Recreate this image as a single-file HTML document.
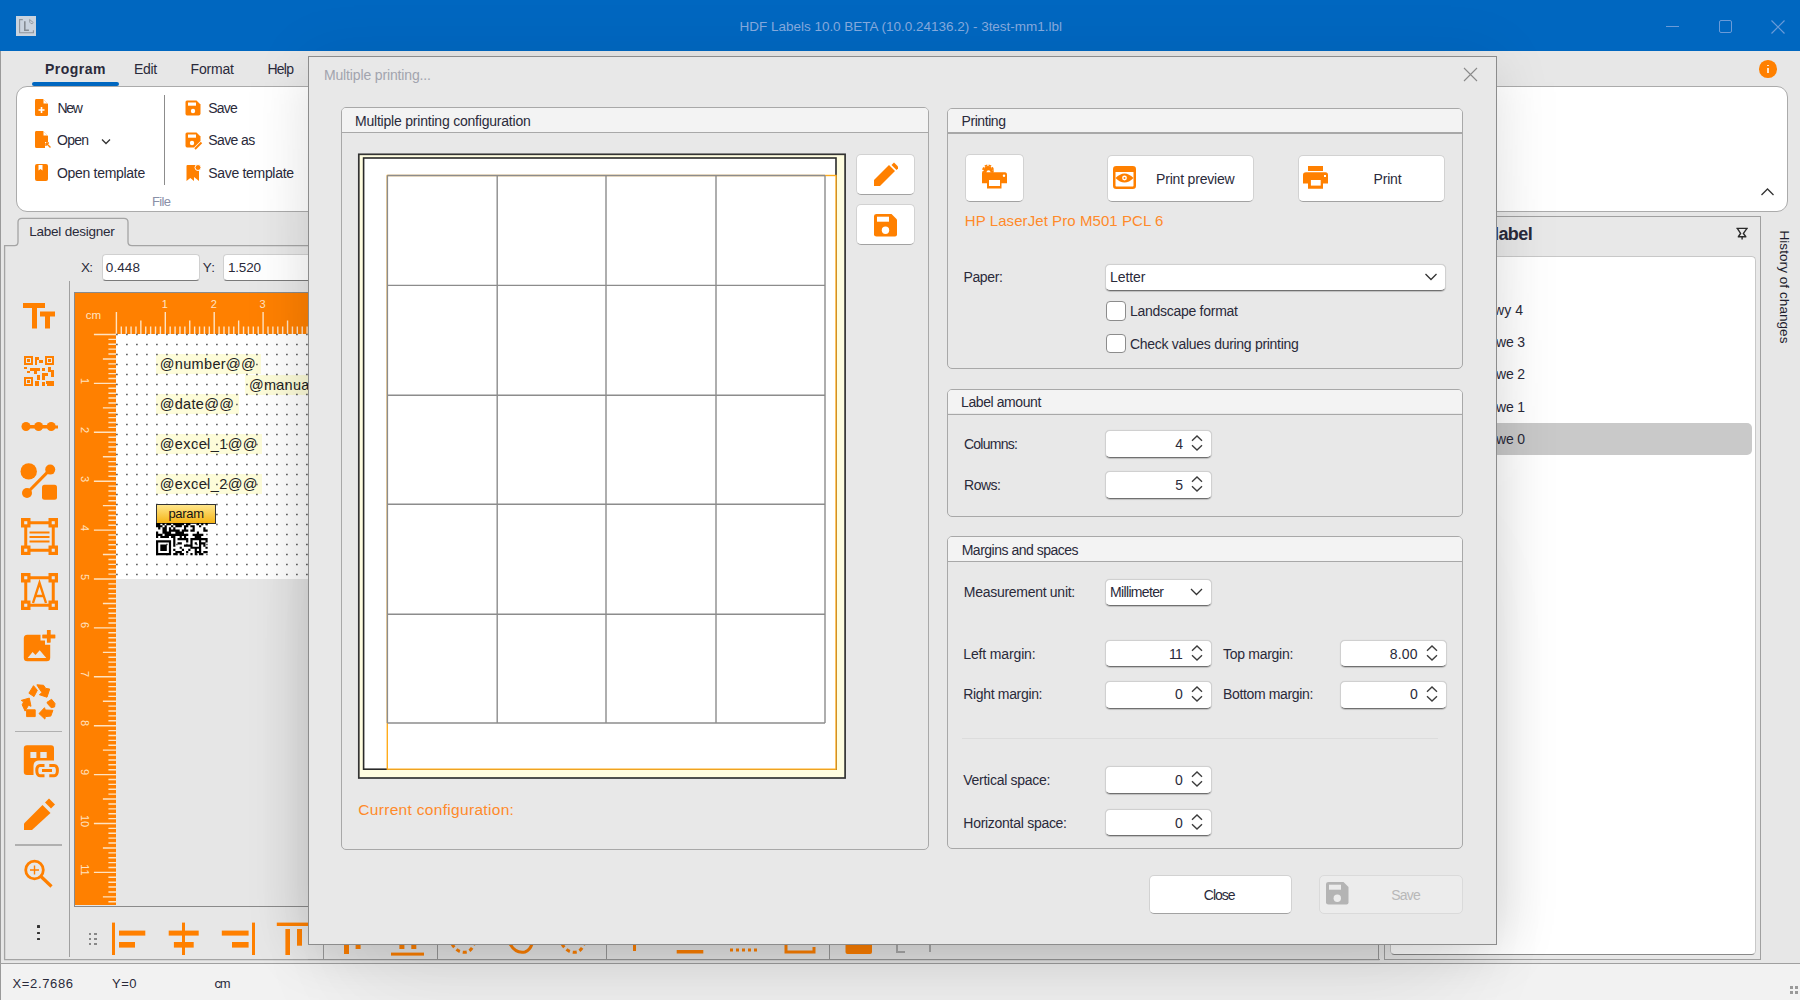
<!DOCTYPE html><html><head><meta charset="utf-8"><style>
html,body{margin:0;padding:0;}
body{width:1800px;height:1000px;overflow:hidden;position:relative;background:#e7e7e7;font-family:"Liberation Sans",sans-serif;}
.t{position:absolute;white-space:nowrap;line-height:20px;height:20px;}
div,svg{box-sizing:border-box;}
</style></head><body>

<div style="position:absolute;left:0px;top:0px;width:1800px;height:51px;background:#0067c0"></div>
<div style="position:absolute;left:16px;top:16px;width:20px;height:20px;background:#c9d3de"></div>
<svg style="position:absolute;left:16px;top:16px;" width="20" height="20" viewBox="0 0 20 20"><path d="M6.8 3.6 H3.6 V16.8 H17.4 V14.2" fill="none" stroke="#8e959c" stroke-width="1.1"/><path d="M8.8 5.2 V14.2 H12.9" fill="none" stroke="#858c93" stroke-width="1.6"/><path d="M13.6 3.5 L17.3 6.6 Q16.5 8 15 7.6 Q13.2 6.8 13.6 3.5Z" fill="none" stroke="#8e959c" stroke-width="0.9"/></svg>
<div class="t" style="left:739.50px;top:17px;font-size:13.5px;color:#86aade;letter-spacing:-0.013px;">HDF Labels 10.0 BETA (10.0.24136.2) - 3test-mm1.lbl</div>
<div style="position:absolute;left:1666px;top:26px;width:13px;height:1.2px;background:#6a9bd8"></div>
<div style="position:absolute;left:1719px;top:20px;width:12.5px;height:12.5px;border:1.2px solid #6a9bd8;border-radius:2px"></div>
<svg style="position:absolute;left:1770px;top:19px;" width="16" height="16" viewBox="0 0 16 16"><path d="M1.5 1.5 L14.5 14.5 M14.5 1.5 L1.5 14.5" stroke="#6a9bd8" stroke-width="1.2"/></svg>
<div style="position:absolute;left:0px;top:51px;width:1px;height:949px;background:#9a9a9a"></div>
<div class="t" style="left:45.00px;top:59px;font-size:14px;color:#2a2a3a;font-weight:bold;letter-spacing:0.492px;">Program</div>
<div class="t" style="left:134.00px;top:59px;font-size:14px;color:#2a2a3a;letter-spacing:-0.367px;">Edit</div>
<div class="t" style="left:190.50px;top:59px;font-size:14px;color:#2a2a3a;letter-spacing:-0.170px;">Format</div>
<div class="t" style="left:267.50px;top:59px;font-size:14px;color:#2a2a3a;letter-spacing:-0.767px;">Help</div>
<div style="position:absolute;left:32px;top:82px;width:87px;height:4px;background:#0067c0;border-radius:2px"></div>
<div style="position:absolute;left:1759px;top:60px;width:17.5px;height:17.5px;border-radius:50%;background:#ff8000"></div>
<div style="position:absolute;left:1767px;top:64.5px;width:2px;height:1.6px;background:#ffe6cc"></div>
<div style="position:absolute;left:1767px;top:67.5px;width:2px;height:5.5px;background:#ffe6cc"></div>
<div style="position:absolute;left:16px;top:86px;width:1772px;height:126px;background:#fff;border:1.5px solid #ababab;border-radius:11px"></div>
<svg style="position:absolute;left:34px;top:98px;" width="16" height="19" viewBox="0 0 16 19"><path d="M2 1 H9 L14 6 V16.5 Q14 18 12.5 18 H2.5 Q1 18 1 16.5 V2.5 Q1 1 2 1Z" fill="#ff8000"/><path d="M9.5 1.5 L13.5 5.5 H9.5Z" fill="#fff"/><path d="M7.5 9 V15 M4.5 12 H10.5" stroke="#fff" stroke-width="1.6"/></svg>
<div class="t" style="left:57.50px;top:98px;font-size:14px;color:#2a2a3a;letter-spacing:-1.375px;">New</div>
<svg style="position:absolute;left:34px;top:130px;" width="18" height="20" viewBox="0 0 18 20"><path d="M2 1 H9 L14 6 V12 H11 V18 H2.5 Q1 18 1 16.5 V2.5 Q1 1 2 1Z" fill="#ff8000"/><path d="M9.5 1.5 L13.5 5.5 H9.5Z" fill="#fff"/><path d="M12 13 L16.5 17.5 M12 13 V16 M12 13 H15" stroke="#ff8000" stroke-width="1.4" fill="none"/></svg>
<div class="t" style="left:57.00px;top:130px;font-size:14px;color:#2a2a3a;letter-spacing:-0.750px;">Open</div>
<svg style="position:absolute;left:101px;top:138px;" width="10" height="7" viewBox="0 0 10 7"><path d="M1 1.5 L5 5.5 L9 1.5" fill="none" stroke="#333" stroke-width="1.3"/></svg>
<svg style="position:absolute;left:34px;top:163px;" width="15" height="19" viewBox="0 0 15 19"><rect x="1" y="1" width="13" height="17" rx="2" fill="#ff8000"/><path d="M4.5 2 V7.5 L6.5 6 L8.5 7.5 V2Z" fill="#fff"/></svg>
<div class="t" style="left:57.00px;top:163px;font-size:14px;color:#2a2a3a;letter-spacing:-0.304px;">Open template</div>
<div style="position:absolute;left:164px;top:95px;width:1.3px;height:90px;background:#8c8c8c"></div>
<svg style="position:absolute;left:185px;top:100px;" width="16" height="16" viewBox="0 0 16 16"><path d="M2 0.5 H11.5 L15.5 4.5 V13.5 Q15.5 15.5 13.5 15.5 H2 Q0.5 15.5 0.5 13.5 V2 Q0.5 0.5 2 0.5Z" fill="#ff8000"/><rect x="3" y="2.5" width="8" height="3.2" fill="#fff"/><circle cx="8" cy="11" r="2.2" fill="#fff"/></svg>
<div class="t" style="left:208.30px;top:98px;font-size:14px;color:#2a2a3a;letter-spacing:-0.800px;">Save</div>
<svg style="position:absolute;left:185px;top:132px;" width="18" height="19" viewBox="0 0 18 19"><path d="M2 0.5 H11.5 L15.5 4.5 V9 L9 15.5 H2 Q0.5 15.5 0.5 13.5 V2 Q0.5 0.5 2 0.5Z" fill="#ff8000"/><rect x="3" y="2.5" width="8" height="3.2" fill="#fff"/><circle cx="7" cy="11" r="2.2" fill="#fff"/><path d="M10 17 L16.5 10.5" stroke="#ff8000" stroke-width="2"/></svg>
<div class="t" style="left:208.30px;top:130px;font-size:14px;color:#2a2a3a;letter-spacing:-0.600px;">Save as</div>
<svg style="position:absolute;left:185px;top:164px;" width="17" height="18" viewBox="0 0 17 18"><path d="M1.5 2 Q1.5 1 2.5 1 H9 V17 L5.3 14 L1.5 17Z M9 1 H11 L14 4 V17 L9 13Z" fill="#ff8000"/><circle cx="13" cy="3.5" r="3" fill="#ff8000" stroke="#fff" stroke-width="1"/></svg>
<div class="t" style="left:208.30px;top:163px;font-size:14px;color:#2a2a3a;letter-spacing:-0.317px;">Save template</div>
<div class="t" style="left:152.00px;top:192px;font-size:13px;color:#8a90a8;letter-spacing:-0.650px;">File</div>
<svg style="position:absolute;left:1760px;top:187px;" width="15" height="10" viewBox="0 0 15 10"><path d="M1.5 8 L7.5 2 L13.5 8" fill="none" stroke="#333" stroke-width="1.3"/></svg>
<svg style="position:absolute;left:0;top:0" width="1400" height="970" viewBox="0 0 1400 970"><path d="M4.6 959.6 V245.6 H14.5 Q18 245.6 18 242 V222.2 Q18 218.3 22 218.3 H124 Q128 218.3 128 222.2 V242 Q128 245.6 132 245.6 H1378.6 V959.6 Z" fill="none" stroke="#a4a4a4" stroke-width="1.3"/></svg>
<div class="t" style="left:29.30px;top:221.5px;font-size:13.5px;color:#2a2a3a;letter-spacing:-0.242px;">Label designer</div>
<div class="t" style="left:81.00px;top:258px;font-size:13.5px;color:#2a2a3a;letter-spacing:-0.750px;">X:</div>
<div style="position:absolute;left:101.5px;top:254px;width:98px;height:27px;background:#fff;border:1px solid #d0d0d0;border-bottom:1.6px solid #7a7a7a;border-radius:4px"></div>
<div class="t" style="left:105.80px;top:258px;font-size:13.5px;color:#2a2a3a;letter-spacing:0.100px;">0.448</div>
<div class="t" style="left:202.70px;top:258px;font-size:13.5px;color:#2a2a3a;letter-spacing:0.300px;">Y:</div>
<div style="position:absolute;left:223px;top:254px;width:120px;height:27px;background:#fff;border:1px solid #d0d0d0;border-bottom:1.6px solid #7a7a7a;border-radius:4px"></div>
<div class="t" style="left:228.00px;top:258px;font-size:13.5px;color:#2a2a3a;letter-spacing:-0.200px;">1.520</div>
<div style="position:absolute;left:69px;top:281px;width:1.2px;height:676px;background:#a0a0a0"></div>
<svg style="position:absolute;left:20px;top:300px;" width="40" height="32" viewBox="0 0 40 32"><path d="M3 3 H25 V8 H17 V28.5 H12 V8 H3Z M20 11.5 H35 V16.5 H30 V28.5 H25 V16.5 H20Z" fill="#ff8000"/></svg>
<svg style="position:absolute;left:24px;top:356px;" width="30" height="31" viewBox="0 0 30 31"><path fill="#ff8000" d="M0 0H9V9H0Z M21 0H30V9H21Z M0 21H9V30H0Z"/><path fill="#e7e7e7" d="M2 2H7V7H2Z M23 2H28V7H23Z M2 23H7V28H2Z"/><path fill="#ff8000" d="M3 3H6V6H3Z M24 3H27V6H24Z M3 24H6V27H3Z M11 1H15V4H13V9H11Z M15 4H19V7H15Z M0 11H3V13H0Z M6 12H16V15H13V18H10V15H6Z M18 12H21V15H18Z M24 11H27V14H30V21H27V16H24Z M3 15H6V17H3Z M13 19H16V24H13Z M18 17H24V20H21V24H18Z M11 25H15V30H11Z M18 26H21V30H18Z M22 25H30V30H23V28H22Z"/></svg>
<svg style="position:absolute;left:20px;top:420px;" width="38" height="14" viewBox="0 0 38 14"><path d="M6 7 H51" stroke="#ff8000" stroke-width="3"/><circle cx="6" cy="6.5" r="4.5" fill="#ff8000"/><circle cx="18.6" cy="6.5" r="4.5" fill="#ff8000"/><circle cx="31.2" cy="6.5" r="4.5" fill="#ff8000"/><path d="M6 6.5 H31" stroke="#ff8000" stroke-width="3"/></svg>
<svg style="position:absolute;left:18px;top:460px;" width="42" height="42" viewBox="0 0 42 42"><circle cx="10.7" cy="11.4" r="8.2" fill="#ff8000"/><circle cx="32.2" cy="9.6" r="5" fill="#ff8000"/><circle cx="9" cy="33" r="5" fill="#ff8000"/><path d="M9 33 L32 9.6" stroke="#ff8000" stroke-width="3"/><rect x="24" y="24.8" width="15" height="15" rx="2.5" fill="#ff8000"/></svg>
<svg style="position:absolute;left:20.5px;top:518px;" width="37" height="37" viewBox="0 0 37 37"><path d="M4.75 4.75 H32.25 V32.25 H4.75Z" fill="none" stroke="#ff8000" stroke-width="3"/><rect x="0" y="0" width="9.5" height="9.5" fill="#ff8000"/><rect x="3.2" y="3.2" width="3.1" height="3.1" fill="#e7e7e7"/><rect x="27.5" y="0" width="9.5" height="9.5" fill="#ff8000"/><rect x="30.7" y="3.2" width="3.1" height="3.1" fill="#e7e7e7"/><rect x="0" y="27.5" width="9.5" height="9.5" fill="#ff8000"/><rect x="3.2" y="30.7" width="3.1" height="3.1" fill="#e7e7e7"/><rect x="27.5" y="27.5" width="9.5" height="9.5" fill="#ff8000"/><rect x="30.7" y="30.7" width="3.1" height="3.1" fill="#e7e7e7"/><path d="M8.5 14.5 H28.5 M8.5 19 H28.5 M8.5 23.5 H28.5" stroke="#ff8000" stroke-width="2.2"/></svg>
<svg style="position:absolute;left:20.5px;top:573.3px;" width="37" height="37" viewBox="0 0 37 37"><path d="M4.75 4.75 H32.25 V32.25 H4.75Z" fill="none" stroke="#ff8000" stroke-width="3"/><rect x="0" y="0" width="9.5" height="9.5" fill="#ff8000"/><rect x="3.2" y="3.2" width="3.1" height="3.1" fill="#e7e7e7"/><rect x="27.5" y="0" width="9.5" height="9.5" fill="#ff8000"/><rect x="30.7" y="3.2" width="3.1" height="3.1" fill="#e7e7e7"/><rect x="0" y="27.5" width="9.5" height="9.5" fill="#ff8000"/><rect x="3.2" y="30.7" width="3.1" height="3.1" fill="#e7e7e7"/><rect x="27.5" y="27.5" width="9.5" height="9.5" fill="#ff8000"/><rect x="30.7" y="30.7" width="3.1" height="3.1" fill="#e7e7e7"/><path d="M12 30 L18.5 10 L25 30 M14.5 23 H22.5" fill="none" stroke="#ff8000" stroke-width="2.4"/></svg>
<svg style="position:absolute;left:0;top:0" width="70" height="800" viewBox="0 0 70 800"><path d="M27.3 634.8 H40.5 V640.5 H45 V644.8 H50.2 V657.8 Q50.2 661.3 46.7 661.3 H27.3 Q23.8 661.3 23.8 657.8 V638.3 Q23.8 634.8 27.3 634.8Z" fill="#ff8000"/><path d="M27.6 658 L32.6 651.9 L35.5 655 L39.7 650.2 L46.3 658Z" fill="#e7e7e7"/><path d="M42.5 636.5 H55.2 M48.7 629.9 V642.5" stroke="#ff8000" stroke-width="3.5"/><path d="M42.5 636.5 H55.2 M48.7 629.9 V642.5" stroke="#ff8000" stroke-width="3.5"/></svg>
<svg style="position:absolute;left:0;top:0" width="70" height="800" viewBox="0 0 70 800"><g fill="#ff8000" stroke="#ff8000" stroke-width="1" stroke-linejoin="round"><polygon points="28.9,693.2 33.5,685.7 37.3,690.3 34,696.6"/><polygon points="36.9,684.8 43.6,685.3 45.7,688.4 49.7,689 47,697.2 39.4,694.7 42,692.6 37.7,686.3"/><polygon points="47,702.3 51.6,699.3 55,703.5 54.6,706.9 51.2,707.7 47.4,703.5"/><polygon points="39,713.6 44.5,707.7 45.3,710 52.9,710.3 50.8,716.1 45.3,716.6 44.9,719.1"/><polygon points="26.6,709.8 35.2,709.8 35.2,716.6 26.6,716.6"/><polygon points="29.3,698.1 31,706.3 28.5,705.2 25.1,711.1 22.2,704.8 23.7,701.8 21.2,700.4"/></g></svg>
<div style="position:absolute;left:15px;top:730.5px;width:47px;height:1.8px;background:#b0b0b0"></div>
<svg style="position:absolute;left:0;top:0" width="70" height="800" viewBox="0 0 70 800"><path d="M27 745.3 H51 Q54 745.3 54 748.3 V760.5 H39 Q33.5 760.5 33.5 766 V775 H27 Q23.8 775 23.8 772 V748.3 Q23.8 745.3 27 745.3Z" fill="#ff8000"/><rect x="30.4" y="752" width="6" height="6" fill="#e7e7e7"/><rect x="40.3" y="752" width="6.4" height="6" fill="#e7e7e7"/><path d="M44.5 765.6 H40 Q36.8 765.6 36.8 770.6 Q36.8 775.7 40 775.7 H44.5 M49.3 765.6 H54.2 Q57.4 765.6 57.4 770.6 Q57.4 775.7 54.2 775.7 H49.3 M42 770.6 H52" fill="none" stroke="#ff8000" stroke-width="3"/></svg>
<svg style="position:absolute;left:22px;top:798px;" width="34" height="34" viewBox="0 0 34 34"><path d="M2 32 V25.5 L20.5 7 L28.5 15 L10 32Z" fill="#ff8000"/><path d="M23 4.5 L27 0.5 L33 6.5 L29 10.5Z" fill="#ff8000"/></svg>
<div style="position:absolute;left:15px;top:844px;width:47px;height:1.8px;background:#b0b0b0"></div>
<svg style="position:absolute;left:22px;top:858px;" width="32" height="32" viewBox="0 0 32 32"><circle cx="12.5" cy="12" r="8.8" fill="none" stroke="#ff8000" stroke-width="2.8"/><path d="M19 18.5 L29.5 28.5" stroke="#ff8000" stroke-width="3.2"/><path d="M12.5 7.5 V16.5 M8 12 H17" stroke="#ff8000" stroke-width="1.4"/></svg>
<div style="position:absolute;left:37.3px;top:925.3px;width:2.6px;height:2.6px;background:#333;border-radius:0.5px"></div>
<div style="position:absolute;left:37.3px;top:931.6999999999999px;width:2.6px;height:2.6px;background:#333;border-radius:0.5px"></div>
<div style="position:absolute;left:37.3px;top:937.8px;width:2.6px;height:2.6px;background:#333;border-radius:0.5px"></div>
<div style="position:absolute;left:74px;top:292px;width:1305px;height:615px;background:#e6e6e6;border:1.3px solid #8a8a8a"></div>
<div style="position:absolute;left:75.3px;top:293.3px;width:1303px;height:41px;background:#ff8000"></div>
<div style="position:absolute;left:75.3px;top:293.3px;width:41px;height:612px;background:#ff8000"></div>
<div style="position:absolute;left:116.4px;top:334px;width:1262px;height:245px;background:#fff"></div>
<svg style="position:absolute;left:0px;top:0px;" width="1400" height="920" viewBox="0 0 1400 920"><path d="M116.40 312.00 V334 M121.29 326.50 V334 M126.18 326.50 V334 M131.07 326.50 V334 M135.96 326.50 V334 M140.85 320.50 V334 M145.74 326.50 V334 M150.63 326.50 V334 M155.52 326.50 V334 M160.41 326.50 V334 M165.30 312.00 V334 M170.19 326.50 V334 M175.08 326.50 V334 M179.97 326.50 V334 M184.86 326.50 V334 M189.75 320.50 V334 M194.64 326.50 V334 M199.53 326.50 V334 M204.42 326.50 V334 M209.31 326.50 V334 M214.20 312.00 V334 M219.09 326.50 V334 M223.98 326.50 V334 M228.87 326.50 V334 M233.76 326.50 V334 M238.65 320.50 V334 M243.54 326.50 V334 M248.43 326.50 V334 M253.32 326.50 V334 M258.21 326.50 V334 M263.10 312.00 V334 M267.99 326.50 V334 M272.88 326.50 V334 M277.77 326.50 V334 M282.66 326.50 V334 M287.55 320.50 V334 M292.44 326.50 V334 M297.33 326.50 V334 M302.22 326.50 V334 M307.11 326.50 V334 M312.00 312.00 V334 M316.89 326.50 V334 M321.78 326.50 V334 M326.67 326.50 V334 M331.56 326.50 V334 M336.45 320.50 V334 M341.34 326.50 V334 M346.23 326.50 V334 M351.12 326.50 V334 M356.01 326.50 V334 M360.90 312.00 V334 M365.79 326.50 V334 M370.68 326.50 V334 M375.57 326.50 V334 M380.46 326.50 V334 M385.35 320.50 V334 M390.24 326.50 V334 M395.13 326.50 V334 M400.02 326.50 V334 M404.91 326.50 V334 M409.80 312.00 V334 M414.69 326.50 V334 M419.58 326.50 V334 M424.47 326.50 V334 M429.36 326.50 V334 M434.25 320.50 V334 M439.14 326.50 V334 M444.03 326.50 V334 M448.92 326.50 V334 M453.81 326.50 V334 M458.70 312.00 V334 M463.59 326.50 V334 M468.48 326.50 V334 M473.37 326.50 V334 M478.26 326.50 V334 M483.15 320.50 V334 M488.04 326.50 V334 M492.93 326.50 V334 M497.82 326.50 V334 M502.71 326.50 V334 M507.60 312.00 V334 M512.49 326.50 V334 M517.38 326.50 V334 M522.27 326.50 V334 M527.16 326.50 V334 M532.05 320.50 V334 M536.94 326.50 V334 M541.83 326.50 V334 M546.72 326.50 V334 M551.61 326.50 V334 M556.50 312.00 V334 M561.39 326.50 V334 M566.28 326.50 V334 M571.17 326.50 V334 M576.06 326.50 V334 M580.95 320.50 V334 M585.84 326.50 V334 M590.73 326.50 V334 M595.62 326.50 V334 M600.51 326.50 V334 M605.40 312.00 V334 M610.29 326.50 V334 M615.18 326.50 V334 M620.07 326.50 V334 M624.96 326.50 V334 M629.85 320.50 V334 M634.74 326.50 V334 M639.63 326.50 V334 M644.52 326.50 V334 M649.41 326.50 V334 M654.30 312.00 V334 M659.19 326.50 V334 M664.08 326.50 V334 M668.97 326.50 V334 M673.86 326.50 V334 M678.75 320.50 V334 M683.64 326.50 V334 M688.53 326.50 V334 M693.42 326.50 V334 M698.31 326.50 V334 M703.20 312.00 V334 M708.09 326.50 V334 M712.98 326.50 V334 M717.87 326.50 V334 M722.76 326.50 V334 M727.65 320.50 V334 M732.54 326.50 V334 M737.43 326.50 V334 M742.32 326.50 V334 M747.21 326.50 V334 M752.10 312.00 V334 M756.99 326.50 V334 M761.88 326.50 V334 M766.77 326.50 V334 M771.66 326.50 V334 M776.55 320.50 V334 M781.44 326.50 V334 M786.33 326.50 V334 M791.22 326.50 V334 M796.11 326.50 V334 M801.00 312.00 V334 M805.89 326.50 V334 M810.78 326.50 V334 M815.67 326.50 V334 M820.56 326.50 V334 M825.45 320.50 V334 M830.34 326.50 V334 M835.23 326.50 V334 M840.12 326.50 V334 M845.01 326.50 V334 M849.90 312.00 V334 M854.79 326.50 V334 M859.68 326.50 V334 M864.57 326.50 V334 M869.46 326.50 V334 M874.35 320.50 V334 M879.24 326.50 V334 M884.13 326.50 V334 M889.02 326.50 V334 M893.91 326.50 V334 M898.80 312.00 V334 M903.69 326.50 V334 M908.58 326.50 V334 M913.47 326.50 V334 M918.36 326.50 V334 M923.25 320.50 V334 M928.14 326.50 V334 M933.03 326.50 V334 M937.92 326.50 V334 M942.81 326.50 V334 M947.70 312.00 V334 M952.59 326.50 V334 M957.48 326.50 V334 M962.37 326.50 V334 M967.26 326.50 V334 M972.15 320.50 V334 M977.04 326.50 V334 M981.93 326.50 V334 M986.82 326.50 V334 M991.71 326.50 V334 M996.60 312.00 V334 M1001.49 326.50 V334 M1006.38 326.50 V334 M1011.27 326.50 V334 M1016.16 326.50 V334 M1021.05 320.50 V334 M1025.94 326.50 V334 M1030.83 326.50 V334 M1035.72 326.50 V334 M1040.61 326.50 V334 M1045.50 312.00 V334 M1050.39 326.50 V334 M1055.28 326.50 V334 M1060.17 326.50 V334 M1065.06 326.50 V334 M1069.95 320.50 V334 M1074.84 326.50 V334 M1079.73 326.50 V334 M1084.62 326.50 V334 M1089.51 326.50 V334 M1094.40 312.00 V334 M1099.29 326.50 V334 M1104.18 326.50 V334 M1109.07 326.50 V334 M1113.96 326.50 V334 M1118.85 320.50 V334 M1123.74 326.50 V334 M1128.63 326.50 V334 M1133.52 326.50 V334 M1138.41 326.50 V334 M1143.30 312.00 V334 M1148.19 326.50 V334 M1153.08 326.50 V334 M1157.97 326.50 V334 M1162.86 326.50 V334 M1167.75 320.50 V334 M1172.64 326.50 V334 M1177.53 326.50 V334 M1182.42 326.50 V334 M1187.31 326.50 V334 M1192.20 312.00 V334 M1197.09 326.50 V334 M1201.98 326.50 V334 M1206.87 326.50 V334 M1211.76 326.50 V334 M1216.65 320.50 V334 M1221.54 326.50 V334 M1226.43 326.50 V334 M1231.32 326.50 V334 M1236.21 326.50 V334 M1241.10 312.00 V334 M1245.99 326.50 V334 M1250.88 326.50 V334 M1255.77 326.50 V334 M1260.66 326.50 V334 M1265.55 320.50 V334 M1270.44 326.50 V334 M1275.33 326.50 V334 M1280.22 326.50 V334 M1285.11 326.50 V334 M1290.00 312.00 V334 M1294.89 326.50 V334 M1299.78 326.50 V334 M1304.67 326.50 V334 M1309.56 326.50 V334 M1314.45 320.50 V334 M1319.34 326.50 V334 M1324.23 326.50 V334 M1329.12 326.50 V334 M1334.01 326.50 V334 M1338.90 312.00 V334 M1343.79 326.50 V334 M1348.68 326.50 V334 M1353.57 326.50 V334 M1358.46 326.50 V334 M1363.35 320.50 V334 M1368.24 326.50 V334 M1373.13 326.50 V334 M93.90 334.50 H116.4 M108.40 339.39 H116.4 M108.40 344.28 H116.4 M108.40 349.17 H116.4 M108.40 354.06 H116.4 M102.90 358.95 H116.4 M108.40 363.84 H116.4 M108.40 368.73 H116.4 M108.40 373.62 H116.4 M108.40 378.51 H116.4 M93.90 383.40 H116.4 M108.40 388.29 H116.4 M108.40 393.18 H116.4 M108.40 398.07 H116.4 M108.40 402.96 H116.4 M102.90 407.85 H116.4 M108.40 412.74 H116.4 M108.40 417.63 H116.4 M108.40 422.52 H116.4 M108.40 427.41 H116.4 M93.90 432.30 H116.4 M108.40 437.19 H116.4 M108.40 442.08 H116.4 M108.40 446.97 H116.4 M108.40 451.86 H116.4 M102.90 456.75 H116.4 M108.40 461.64 H116.4 M108.40 466.53 H116.4 M108.40 471.42 H116.4 M108.40 476.31 H116.4 M93.90 481.20 H116.4 M108.40 486.09 H116.4 M108.40 490.98 H116.4 M108.40 495.87 H116.4 M108.40 500.76 H116.4 M102.90 505.65 H116.4 M108.40 510.54 H116.4 M108.40 515.43 H116.4 M108.40 520.32 H116.4 M108.40 525.21 H116.4 M93.90 530.10 H116.4 M108.40 534.99 H116.4 M108.40 539.88 H116.4 M108.40 544.77 H116.4 M108.40 549.66 H116.4 M102.90 554.55 H116.4 M108.40 559.44 H116.4 M108.40 564.33 H116.4 M108.40 569.22 H116.4 M108.40 574.11 H116.4 M93.90 579.00 H116.4 M108.40 583.89 H116.4 M108.40 588.78 H116.4 M108.40 593.67 H116.4 M108.40 598.56 H116.4 M102.90 603.45 H116.4 M108.40 608.34 H116.4 M108.40 613.23 H116.4 M108.40 618.12 H116.4 M108.40 623.01 H116.4 M93.90 627.90 H116.4 M108.40 632.79 H116.4 M108.40 637.68 H116.4 M108.40 642.57 H116.4 M108.40 647.46 H116.4 M102.90 652.35 H116.4 M108.40 657.24 H116.4 M108.40 662.13 H116.4 M108.40 667.02 H116.4 M108.40 671.91 H116.4 M93.90 676.80 H116.4 M108.40 681.69 H116.4 M108.40 686.58 H116.4 M108.40 691.47 H116.4 M108.40 696.36 H116.4 M102.90 701.25 H116.4 M108.40 706.14 H116.4 M108.40 711.03 H116.4 M108.40 715.92 H116.4 M108.40 720.81 H116.4 M93.90 725.70 H116.4 M108.40 730.59 H116.4 M108.40 735.48 H116.4 M108.40 740.37 H116.4 M108.40 745.26 H116.4 M102.90 750.15 H116.4 M108.40 755.04 H116.4 M108.40 759.93 H116.4 M108.40 764.82 H116.4 M108.40 769.71 H116.4 M93.90 774.60 H116.4 M108.40 779.49 H116.4 M108.40 784.38 H116.4 M108.40 789.27 H116.4 M108.40 794.16 H116.4 M102.90 799.05 H116.4 M108.40 803.94 H116.4 M108.40 808.83 H116.4 M108.40 813.72 H116.4 M108.40 818.61 H116.4 M93.90 823.50 H116.4 M108.40 828.39 H116.4 M108.40 833.28 H116.4 M108.40 838.17 H116.4 M108.40 843.06 H116.4 M102.90 847.95 H116.4 M108.40 852.84 H116.4 M108.40 857.73 H116.4 M108.40 862.62 H116.4 M108.40 867.51 H116.4 M93.90 872.40 H116.4 M108.40 877.29 H116.4 M108.40 882.18 H116.4 M108.40 887.07 H116.4 M108.40 891.96 H116.4 M102.90 896.85 H116.4 M108.40 901.74 H116.4" stroke="#ffe3c2" stroke-width="1.4" fill="none"/></svg>
<div class="t" style="left:161.80px;top:293.5px;font-size:11px;color:#ffe3c2;">1</div>
<div class="t" style="left:210.70px;top:293.5px;font-size:11px;color:#ffe3c2;">2</div>
<div class="t" style="left:259.60px;top:293.5px;font-size:11px;color:#ffe3c2;">3</div>
<div class="t" style="left:308.50px;top:293.5px;font-size:11px;color:#ffe3c2;">4</div>
<div class="t" style="left:357.40px;top:293.5px;font-size:11px;color:#ffe3c2;">5</div>
<div class="t" style="left:406.30px;top:293.5px;font-size:11px;color:#ffe3c2;">6</div>
<div class="t" style="left:455.20px;top:293.5px;font-size:11px;color:#ffe3c2;">7</div>
<div class="t" style="left:504.10px;top:293.5px;font-size:11px;color:#ffe3c2;">8</div>
<div class="t" style="left:553.00px;top:293.5px;font-size:11px;color:#ffe3c2;">9</div>
<div class="t" style="left:601.90px;top:293.5px;font-size:11px;color:#ffe3c2;">10</div>
<div class="t" style="left:650.80px;top:293.5px;font-size:11px;color:#ffe3c2;">11</div>
<div class="t" style="left:699.70px;top:293.5px;font-size:11px;color:#ffe3c2;">12</div>
<div class="t" style="left:748.60px;top:293.5px;font-size:11px;color:#ffe3c2;">13</div>
<div class="t" style="left:797.50px;top:293.5px;font-size:11px;color:#ffe3c2;">14</div>
<div class="t" style="left:846.40px;top:293.5px;font-size:11px;color:#ffe3c2;">15</div>
<div class="t" style="left:895.30px;top:293.5px;font-size:11px;color:#ffe3c2;">16</div>
<div class="t" style="left:944.20px;top:293.5px;font-size:11px;color:#ffe3c2;">17</div>
<div class="t" style="left:993.10px;top:293.5px;font-size:11px;color:#ffe3c2;">18</div>
<div class="t" style="left:1042.00px;top:293.5px;font-size:11px;color:#ffe3c2;">19</div>
<div class="t" style="left:1090.90px;top:293.5px;font-size:11px;color:#ffe3c2;">20</div>
<div class="t" style="left:1139.80px;top:293.5px;font-size:11px;color:#ffe3c2;">21</div>
<div class="t" style="left:1188.70px;top:293.5px;font-size:11px;color:#ffe3c2;">22</div>
<div class="t" style="left:1237.60px;top:293.5px;font-size:11px;color:#ffe3c2;">23</div>
<div class="t" style="left:1286.50px;top:293.5px;font-size:11px;color:#ffe3c2;">24</div>
<div class="t" style="left:1335.40px;top:293.5px;font-size:11px;color:#ffe3c2;">25</div>
<div class="t" style="left:85.70px;top:305px;font-size:11.5px;color:#ffe3c2;letter-spacing:-0.050px;">cm</div>
<div class="t" style="left:75px;top:370.9px;width:20px;text-align:center;font-size:11px;color:#ffe3c2;transform:rotate(90deg);line-height:20px">1</div>
<div class="t" style="left:75px;top:419.8px;width:20px;text-align:center;font-size:11px;color:#ffe3c2;transform:rotate(90deg);line-height:20px">2</div>
<div class="t" style="left:75px;top:468.7px;width:20px;text-align:center;font-size:11px;color:#ffe3c2;transform:rotate(90deg);line-height:20px">3</div>
<div class="t" style="left:75px;top:517.6px;width:20px;text-align:center;font-size:11px;color:#ffe3c2;transform:rotate(90deg);line-height:20px">4</div>
<div class="t" style="left:75px;top:566.5px;width:20px;text-align:center;font-size:11px;color:#ffe3c2;transform:rotate(90deg);line-height:20px">5</div>
<div class="t" style="left:75px;top:615.4px;width:20px;text-align:center;font-size:11px;color:#ffe3c2;transform:rotate(90deg);line-height:20px">6</div>
<div class="t" style="left:75px;top:664.3px;width:20px;text-align:center;font-size:11px;color:#ffe3c2;transform:rotate(90deg);line-height:20px">7</div>
<div class="t" style="left:75px;top:713.2px;width:20px;text-align:center;font-size:11px;color:#ffe3c2;transform:rotate(90deg);line-height:20px">8</div>
<div class="t" style="left:75px;top:762.0999999999999px;width:20px;text-align:center;font-size:11px;color:#ffe3c2;transform:rotate(90deg);line-height:20px">9</div>
<div class="t" style="left:75px;top:811.0px;width:20px;text-align:center;font-size:11px;color:#ffe3c2;transform:rotate(90deg);line-height:20px">10</div>
<div class="t" style="left:75px;top:859.9px;width:20px;text-align:center;font-size:11px;color:#ffe3c2;transform:rotate(90deg);line-height:20px">11</div>
<div style="position:absolute;left:156px;top:354px;width:105px;height:19.5px;background:#fdfcd9"></div>
<div style="position:absolute;left:245.4px;top:375.3px;width:200px;height:20px;background:#fdfcd9"></div>
<div style="position:absolute;left:156px;top:394px;width:82.6px;height:20px;background:#fdfcd9"></div>
<div style="position:absolute;left:156px;top:434px;width:106.4px;height:20px;background:#fdfcd9"></div>
<div style="position:absolute;left:156px;top:474px;width:106.4px;height:20px;background:#fdfcd9"></div>
<svg style="position:absolute;left:0px;top:0px;" width="1400" height="600" viewBox="0 0 1400 600"><path d="M116.1 334.4h1.6 M126.1 334.4h1.6 M136.1 334.4h1.6 M146.1 334.4h1.6 M156.1 334.4h1.6 M166.1 334.4h1.6 M176.1 334.4h1.6 M186.1 334.4h1.6 M196.1 334.4h1.6 M206.1 334.4h1.6 M216.1 334.4h1.6 M226.1 334.4h1.6 M236.1 334.4h1.6 M246.1 334.4h1.6 M256.1 334.4h1.6 M266.1 334.4h1.6 M276.1 334.4h1.6 M286.1 334.4h1.6 M296.1 334.4h1.6 M306.1 334.4h1.6 M316.1 334.4h1.6 M326.1 334.4h1.6 M336.1 334.4h1.6 M346.1 334.4h1.6 M356.1 334.4h1.6 M366.1 334.4h1.6 M376.1 334.4h1.6 M386.1 334.4h1.6 M396.1 334.4h1.6 M406.1 334.4h1.6 M416.1 334.4h1.6 M426.1 334.4h1.6 M436.1 334.4h1.6 M446.1 334.4h1.6 M456.1 334.4h1.6 M466.1 334.4h1.6 M476.1 334.4h1.6 M486.1 334.4h1.6 M496.1 334.4h1.6 M506.1 334.4h1.6 M516.1 334.4h1.6 M526.1 334.4h1.6 M536.1 334.4h1.6 M546.1 334.4h1.6 M556.1 334.4h1.6 M566.1 334.4h1.6 M576.1 334.4h1.6 M586.1 334.4h1.6 M596.1 334.4h1.6 M606.1 334.4h1.6 M616.1 334.4h1.6 M626.1 334.4h1.6 M636.1 334.4h1.6 M646.1 334.4h1.6 M656.1 334.4h1.6 M666.1 334.4h1.6 M676.1 334.4h1.6 M686.1 334.4h1.6 M696.1 334.4h1.6 M706.1 334.4h1.6 M716.1 334.4h1.6 M726.1 334.4h1.6 M736.1 334.4h1.6 M746.1 334.4h1.6 M756.1 334.4h1.6 M766.1 334.4h1.6 M776.1 334.4h1.6 M786.1 334.4h1.6 M796.1 334.4h1.6 M806.1 334.4h1.6 M816.1 334.4h1.6 M826.1 334.4h1.6 M836.1 334.4h1.6 M846.1 334.4h1.6 M856.1 334.4h1.6 M866.1 334.4h1.6 M876.1 334.4h1.6 M886.1 334.4h1.6 M896.1 334.4h1.6 M906.1 334.4h1.6 M916.1 334.4h1.6 M926.1 334.4h1.6 M936.1 334.4h1.6 M946.1 334.4h1.6 M956.1 334.4h1.6 M966.1 334.4h1.6 M976.1 334.4h1.6 M986.1 334.4h1.6 M996.1 334.4h1.6 M1006.1 334.4h1.6 M1016.1 334.4h1.6 M1026.1 334.4h1.6 M1036.1 334.4h1.6 M1046.1 334.4h1.6 M1056.1 334.4h1.6 M1066.1 334.4h1.6 M1076.1 334.4h1.6 M1086.1 334.4h1.6 M1096.1 334.4h1.6 M1106.1 334.4h1.6 M1116.1 334.4h1.6 M1126.1 334.4h1.6 M1136.1 334.4h1.6 M1146.1 334.4h1.6 M1156.1 334.4h1.6 M1166.1 334.4h1.6 M1176.1 334.4h1.6 M1186.1 334.4h1.6 M1196.1 334.4h1.6 M1206.1 334.4h1.6 M1216.1 334.4h1.6 M1226.1 334.4h1.6 M1236.1 334.4h1.6 M1246.1 334.4h1.6 M1256.1 334.4h1.6 M1266.1 334.4h1.6 M1276.1 334.4h1.6 M1286.1 334.4h1.6 M1296.1 334.4h1.6 M1306.1 334.4h1.6 M1316.1 334.4h1.6 M1326.1 334.4h1.6 M1336.1 334.4h1.6 M1346.1 334.4h1.6 M1356.1 334.4h1.6 M1366.1 334.4h1.6 M1376.1 334.4h1.6 M116.1 344.4h1.6 M126.1 344.4h1.6 M136.1 344.4h1.6 M146.1 344.4h1.6 M156.1 344.4h1.6 M166.1 344.4h1.6 M176.1 344.4h1.6 M186.1 344.4h1.6 M196.1 344.4h1.6 M206.1 344.4h1.6 M216.1 344.4h1.6 M226.1 344.4h1.6 M236.1 344.4h1.6 M246.1 344.4h1.6 M256.1 344.4h1.6 M266.1 344.4h1.6 M276.1 344.4h1.6 M286.1 344.4h1.6 M296.1 344.4h1.6 M306.1 344.4h1.6 M316.1 344.4h1.6 M326.1 344.4h1.6 M336.1 344.4h1.6 M346.1 344.4h1.6 M356.1 344.4h1.6 M366.1 344.4h1.6 M376.1 344.4h1.6 M386.1 344.4h1.6 M396.1 344.4h1.6 M406.1 344.4h1.6 M416.1 344.4h1.6 M426.1 344.4h1.6 M436.1 344.4h1.6 M446.1 344.4h1.6 M456.1 344.4h1.6 M466.1 344.4h1.6 M476.1 344.4h1.6 M486.1 344.4h1.6 M496.1 344.4h1.6 M506.1 344.4h1.6 M516.1 344.4h1.6 M526.1 344.4h1.6 M536.1 344.4h1.6 M546.1 344.4h1.6 M556.1 344.4h1.6 M566.1 344.4h1.6 M576.1 344.4h1.6 M586.1 344.4h1.6 M596.1 344.4h1.6 M606.1 344.4h1.6 M616.1 344.4h1.6 M626.1 344.4h1.6 M636.1 344.4h1.6 M646.1 344.4h1.6 M656.1 344.4h1.6 M666.1 344.4h1.6 M676.1 344.4h1.6 M686.1 344.4h1.6 M696.1 344.4h1.6 M706.1 344.4h1.6 M716.1 344.4h1.6 M726.1 344.4h1.6 M736.1 344.4h1.6 M746.1 344.4h1.6 M756.1 344.4h1.6 M766.1 344.4h1.6 M776.1 344.4h1.6 M786.1 344.4h1.6 M796.1 344.4h1.6 M806.1 344.4h1.6 M816.1 344.4h1.6 M826.1 344.4h1.6 M836.1 344.4h1.6 M846.1 344.4h1.6 M856.1 344.4h1.6 M866.1 344.4h1.6 M876.1 344.4h1.6 M886.1 344.4h1.6 M896.1 344.4h1.6 M906.1 344.4h1.6 M916.1 344.4h1.6 M926.1 344.4h1.6 M936.1 344.4h1.6 M946.1 344.4h1.6 M956.1 344.4h1.6 M966.1 344.4h1.6 M976.1 344.4h1.6 M986.1 344.4h1.6 M996.1 344.4h1.6 M1006.1 344.4h1.6 M1016.1 344.4h1.6 M1026.1 344.4h1.6 M1036.1 344.4h1.6 M1046.1 344.4h1.6 M1056.1 344.4h1.6 M1066.1 344.4h1.6 M1076.1 344.4h1.6 M1086.1 344.4h1.6 M1096.1 344.4h1.6 M1106.1 344.4h1.6 M1116.1 344.4h1.6 M1126.1 344.4h1.6 M1136.1 344.4h1.6 M1146.1 344.4h1.6 M1156.1 344.4h1.6 M1166.1 344.4h1.6 M1176.1 344.4h1.6 M1186.1 344.4h1.6 M1196.1 344.4h1.6 M1206.1 344.4h1.6 M1216.1 344.4h1.6 M1226.1 344.4h1.6 M1236.1 344.4h1.6 M1246.1 344.4h1.6 M1256.1 344.4h1.6 M1266.1 344.4h1.6 M1276.1 344.4h1.6 M1286.1 344.4h1.6 M1296.1 344.4h1.6 M1306.1 344.4h1.6 M1316.1 344.4h1.6 M1326.1 344.4h1.6 M1336.1 344.4h1.6 M1346.1 344.4h1.6 M1356.1 344.4h1.6 M1366.1 344.4h1.6 M1376.1 344.4h1.6 M116.1 354.4h1.6 M126.1 354.4h1.6 M136.1 354.4h1.6 M146.1 354.4h1.6 M156.1 354.4h1.6 M166.1 354.4h1.6 M176.1 354.4h1.6 M186.1 354.4h1.6 M196.1 354.4h1.6 M206.1 354.4h1.6 M216.1 354.4h1.6 M226.1 354.4h1.6 M236.1 354.4h1.6 M246.1 354.4h1.6 M256.1 354.4h1.6 M266.1 354.4h1.6 M276.1 354.4h1.6 M286.1 354.4h1.6 M296.1 354.4h1.6 M306.1 354.4h1.6 M316.1 354.4h1.6 M326.1 354.4h1.6 M336.1 354.4h1.6 M346.1 354.4h1.6 M356.1 354.4h1.6 M366.1 354.4h1.6 M376.1 354.4h1.6 M386.1 354.4h1.6 M396.1 354.4h1.6 M406.1 354.4h1.6 M416.1 354.4h1.6 M426.1 354.4h1.6 M436.1 354.4h1.6 M446.1 354.4h1.6 M456.1 354.4h1.6 M466.1 354.4h1.6 M476.1 354.4h1.6 M486.1 354.4h1.6 M496.1 354.4h1.6 M506.1 354.4h1.6 M516.1 354.4h1.6 M526.1 354.4h1.6 M536.1 354.4h1.6 M546.1 354.4h1.6 M556.1 354.4h1.6 M566.1 354.4h1.6 M576.1 354.4h1.6 M586.1 354.4h1.6 M596.1 354.4h1.6 M606.1 354.4h1.6 M616.1 354.4h1.6 M626.1 354.4h1.6 M636.1 354.4h1.6 M646.1 354.4h1.6 M656.1 354.4h1.6 M666.1 354.4h1.6 M676.1 354.4h1.6 M686.1 354.4h1.6 M696.1 354.4h1.6 M706.1 354.4h1.6 M716.1 354.4h1.6 M726.1 354.4h1.6 M736.1 354.4h1.6 M746.1 354.4h1.6 M756.1 354.4h1.6 M766.1 354.4h1.6 M776.1 354.4h1.6 M786.1 354.4h1.6 M796.1 354.4h1.6 M806.1 354.4h1.6 M816.1 354.4h1.6 M826.1 354.4h1.6 M836.1 354.4h1.6 M846.1 354.4h1.6 M856.1 354.4h1.6 M866.1 354.4h1.6 M876.1 354.4h1.6 M886.1 354.4h1.6 M896.1 354.4h1.6 M906.1 354.4h1.6 M916.1 354.4h1.6 M926.1 354.4h1.6 M936.1 354.4h1.6 M946.1 354.4h1.6 M956.1 354.4h1.6 M966.1 354.4h1.6 M976.1 354.4h1.6 M986.1 354.4h1.6 M996.1 354.4h1.6 M1006.1 354.4h1.6 M1016.1 354.4h1.6 M1026.1 354.4h1.6 M1036.1 354.4h1.6 M1046.1 354.4h1.6 M1056.1 354.4h1.6 M1066.1 354.4h1.6 M1076.1 354.4h1.6 M1086.1 354.4h1.6 M1096.1 354.4h1.6 M1106.1 354.4h1.6 M1116.1 354.4h1.6 M1126.1 354.4h1.6 M1136.1 354.4h1.6 M1146.1 354.4h1.6 M1156.1 354.4h1.6 M1166.1 354.4h1.6 M1176.1 354.4h1.6 M1186.1 354.4h1.6 M1196.1 354.4h1.6 M1206.1 354.4h1.6 M1216.1 354.4h1.6 M1226.1 354.4h1.6 M1236.1 354.4h1.6 M1246.1 354.4h1.6 M1256.1 354.4h1.6 M1266.1 354.4h1.6 M1276.1 354.4h1.6 M1286.1 354.4h1.6 M1296.1 354.4h1.6 M1306.1 354.4h1.6 M1316.1 354.4h1.6 M1326.1 354.4h1.6 M1336.1 354.4h1.6 M1346.1 354.4h1.6 M1356.1 354.4h1.6 M1366.1 354.4h1.6 M1376.1 354.4h1.6 M116.1 364.4h1.6 M126.1 364.4h1.6 M136.1 364.4h1.6 M146.1 364.4h1.6 M156.1 364.4h1.6 M166.1 364.4h1.6 M176.1 364.4h1.6 M186.1 364.4h1.6 M196.1 364.4h1.6 M206.1 364.4h1.6 M216.1 364.4h1.6 M226.1 364.4h1.6 M236.1 364.4h1.6 M246.1 364.4h1.6 M256.1 364.4h1.6 M266.1 364.4h1.6 M276.1 364.4h1.6 M286.1 364.4h1.6 M296.1 364.4h1.6 M306.1 364.4h1.6 M316.1 364.4h1.6 M326.1 364.4h1.6 M336.1 364.4h1.6 M346.1 364.4h1.6 M356.1 364.4h1.6 M366.1 364.4h1.6 M376.1 364.4h1.6 M386.1 364.4h1.6 M396.1 364.4h1.6 M406.1 364.4h1.6 M416.1 364.4h1.6 M426.1 364.4h1.6 M436.1 364.4h1.6 M446.1 364.4h1.6 M456.1 364.4h1.6 M466.1 364.4h1.6 M476.1 364.4h1.6 M486.1 364.4h1.6 M496.1 364.4h1.6 M506.1 364.4h1.6 M516.1 364.4h1.6 M526.1 364.4h1.6 M536.1 364.4h1.6 M546.1 364.4h1.6 M556.1 364.4h1.6 M566.1 364.4h1.6 M576.1 364.4h1.6 M586.1 364.4h1.6 M596.1 364.4h1.6 M606.1 364.4h1.6 M616.1 364.4h1.6 M626.1 364.4h1.6 M636.1 364.4h1.6 M646.1 364.4h1.6 M656.1 364.4h1.6 M666.1 364.4h1.6 M676.1 364.4h1.6 M686.1 364.4h1.6 M696.1 364.4h1.6 M706.1 364.4h1.6 M716.1 364.4h1.6 M726.1 364.4h1.6 M736.1 364.4h1.6 M746.1 364.4h1.6 M756.1 364.4h1.6 M766.1 364.4h1.6 M776.1 364.4h1.6 M786.1 364.4h1.6 M796.1 364.4h1.6 M806.1 364.4h1.6 M816.1 364.4h1.6 M826.1 364.4h1.6 M836.1 364.4h1.6 M846.1 364.4h1.6 M856.1 364.4h1.6 M866.1 364.4h1.6 M876.1 364.4h1.6 M886.1 364.4h1.6 M896.1 364.4h1.6 M906.1 364.4h1.6 M916.1 364.4h1.6 M926.1 364.4h1.6 M936.1 364.4h1.6 M946.1 364.4h1.6 M956.1 364.4h1.6 M966.1 364.4h1.6 M976.1 364.4h1.6 M986.1 364.4h1.6 M996.1 364.4h1.6 M1006.1 364.4h1.6 M1016.1 364.4h1.6 M1026.1 364.4h1.6 M1036.1 364.4h1.6 M1046.1 364.4h1.6 M1056.1 364.4h1.6 M1066.1 364.4h1.6 M1076.1 364.4h1.6 M1086.1 364.4h1.6 M1096.1 364.4h1.6 M1106.1 364.4h1.6 M1116.1 364.4h1.6 M1126.1 364.4h1.6 M1136.1 364.4h1.6 M1146.1 364.4h1.6 M1156.1 364.4h1.6 M1166.1 364.4h1.6 M1176.1 364.4h1.6 M1186.1 364.4h1.6 M1196.1 364.4h1.6 M1206.1 364.4h1.6 M1216.1 364.4h1.6 M1226.1 364.4h1.6 M1236.1 364.4h1.6 M1246.1 364.4h1.6 M1256.1 364.4h1.6 M1266.1 364.4h1.6 M1276.1 364.4h1.6 M1286.1 364.4h1.6 M1296.1 364.4h1.6 M1306.1 364.4h1.6 M1316.1 364.4h1.6 M1326.1 364.4h1.6 M1336.1 364.4h1.6 M1346.1 364.4h1.6 M1356.1 364.4h1.6 M1366.1 364.4h1.6 M1376.1 364.4h1.6 M116.1 374.4h1.6 M126.1 374.4h1.6 M136.1 374.4h1.6 M146.1 374.4h1.6 M156.1 374.4h1.6 M166.1 374.4h1.6 M176.1 374.4h1.6 M186.1 374.4h1.6 M196.1 374.4h1.6 M206.1 374.4h1.6 M216.1 374.4h1.6 M226.1 374.4h1.6 M236.1 374.4h1.6 M246.1 374.4h1.6 M256.1 374.4h1.6 M266.1 374.4h1.6 M276.1 374.4h1.6 M286.1 374.4h1.6 M296.1 374.4h1.6 M306.1 374.4h1.6 M316.1 374.4h1.6 M326.1 374.4h1.6 M336.1 374.4h1.6 M346.1 374.4h1.6 M356.1 374.4h1.6 M366.1 374.4h1.6 M376.1 374.4h1.6 M386.1 374.4h1.6 M396.1 374.4h1.6 M406.1 374.4h1.6 M416.1 374.4h1.6 M426.1 374.4h1.6 M436.1 374.4h1.6 M446.1 374.4h1.6 M456.1 374.4h1.6 M466.1 374.4h1.6 M476.1 374.4h1.6 M486.1 374.4h1.6 M496.1 374.4h1.6 M506.1 374.4h1.6 M516.1 374.4h1.6 M526.1 374.4h1.6 M536.1 374.4h1.6 M546.1 374.4h1.6 M556.1 374.4h1.6 M566.1 374.4h1.6 M576.1 374.4h1.6 M586.1 374.4h1.6 M596.1 374.4h1.6 M606.1 374.4h1.6 M616.1 374.4h1.6 M626.1 374.4h1.6 M636.1 374.4h1.6 M646.1 374.4h1.6 M656.1 374.4h1.6 M666.1 374.4h1.6 M676.1 374.4h1.6 M686.1 374.4h1.6 M696.1 374.4h1.6 M706.1 374.4h1.6 M716.1 374.4h1.6 M726.1 374.4h1.6 M736.1 374.4h1.6 M746.1 374.4h1.6 M756.1 374.4h1.6 M766.1 374.4h1.6 M776.1 374.4h1.6 M786.1 374.4h1.6 M796.1 374.4h1.6 M806.1 374.4h1.6 M816.1 374.4h1.6 M826.1 374.4h1.6 M836.1 374.4h1.6 M846.1 374.4h1.6 M856.1 374.4h1.6 M866.1 374.4h1.6 M876.1 374.4h1.6 M886.1 374.4h1.6 M896.1 374.4h1.6 M906.1 374.4h1.6 M916.1 374.4h1.6 M926.1 374.4h1.6 M936.1 374.4h1.6 M946.1 374.4h1.6 M956.1 374.4h1.6 M966.1 374.4h1.6 M976.1 374.4h1.6 M986.1 374.4h1.6 M996.1 374.4h1.6 M1006.1 374.4h1.6 M1016.1 374.4h1.6 M1026.1 374.4h1.6 M1036.1 374.4h1.6 M1046.1 374.4h1.6 M1056.1 374.4h1.6 M1066.1 374.4h1.6 M1076.1 374.4h1.6 M1086.1 374.4h1.6 M1096.1 374.4h1.6 M1106.1 374.4h1.6 M1116.1 374.4h1.6 M1126.1 374.4h1.6 M1136.1 374.4h1.6 M1146.1 374.4h1.6 M1156.1 374.4h1.6 M1166.1 374.4h1.6 M1176.1 374.4h1.6 M1186.1 374.4h1.6 M1196.1 374.4h1.6 M1206.1 374.4h1.6 M1216.1 374.4h1.6 M1226.1 374.4h1.6 M1236.1 374.4h1.6 M1246.1 374.4h1.6 M1256.1 374.4h1.6 M1266.1 374.4h1.6 M1276.1 374.4h1.6 M1286.1 374.4h1.6 M1296.1 374.4h1.6 M1306.1 374.4h1.6 M1316.1 374.4h1.6 M1326.1 374.4h1.6 M1336.1 374.4h1.6 M1346.1 374.4h1.6 M1356.1 374.4h1.6 M1366.1 374.4h1.6 M1376.1 374.4h1.6 M116.1 384.4h1.6 M126.1 384.4h1.6 M136.1 384.4h1.6 M146.1 384.4h1.6 M156.1 384.4h1.6 M166.1 384.4h1.6 M176.1 384.4h1.6 M186.1 384.4h1.6 M196.1 384.4h1.6 M206.1 384.4h1.6 M216.1 384.4h1.6 M226.1 384.4h1.6 M236.1 384.4h1.6 M246.1 384.4h1.6 M256.1 384.4h1.6 M266.1 384.4h1.6 M276.1 384.4h1.6 M286.1 384.4h1.6 M296.1 384.4h1.6 M306.1 384.4h1.6 M316.1 384.4h1.6 M326.1 384.4h1.6 M336.1 384.4h1.6 M346.1 384.4h1.6 M356.1 384.4h1.6 M366.1 384.4h1.6 M376.1 384.4h1.6 M386.1 384.4h1.6 M396.1 384.4h1.6 M406.1 384.4h1.6 M416.1 384.4h1.6 M426.1 384.4h1.6 M436.1 384.4h1.6 M446.1 384.4h1.6 M456.1 384.4h1.6 M466.1 384.4h1.6 M476.1 384.4h1.6 M486.1 384.4h1.6 M496.1 384.4h1.6 M506.1 384.4h1.6 M516.1 384.4h1.6 M526.1 384.4h1.6 M536.1 384.4h1.6 M546.1 384.4h1.6 M556.1 384.4h1.6 M566.1 384.4h1.6 M576.1 384.4h1.6 M586.1 384.4h1.6 M596.1 384.4h1.6 M606.1 384.4h1.6 M616.1 384.4h1.6 M626.1 384.4h1.6 M636.1 384.4h1.6 M646.1 384.4h1.6 M656.1 384.4h1.6 M666.1 384.4h1.6 M676.1 384.4h1.6 M686.1 384.4h1.6 M696.1 384.4h1.6 M706.1 384.4h1.6 M716.1 384.4h1.6 M726.1 384.4h1.6 M736.1 384.4h1.6 M746.1 384.4h1.6 M756.1 384.4h1.6 M766.1 384.4h1.6 M776.1 384.4h1.6 M786.1 384.4h1.6 M796.1 384.4h1.6 M806.1 384.4h1.6 M816.1 384.4h1.6 M826.1 384.4h1.6 M836.1 384.4h1.6 M846.1 384.4h1.6 M856.1 384.4h1.6 M866.1 384.4h1.6 M876.1 384.4h1.6 M886.1 384.4h1.6 M896.1 384.4h1.6 M906.1 384.4h1.6 M916.1 384.4h1.6 M926.1 384.4h1.6 M936.1 384.4h1.6 M946.1 384.4h1.6 M956.1 384.4h1.6 M966.1 384.4h1.6 M976.1 384.4h1.6 M986.1 384.4h1.6 M996.1 384.4h1.6 M1006.1 384.4h1.6 M1016.1 384.4h1.6 M1026.1 384.4h1.6 M1036.1 384.4h1.6 M1046.1 384.4h1.6 M1056.1 384.4h1.6 M1066.1 384.4h1.6 M1076.1 384.4h1.6 M1086.1 384.4h1.6 M1096.1 384.4h1.6 M1106.1 384.4h1.6 M1116.1 384.4h1.6 M1126.1 384.4h1.6 M1136.1 384.4h1.6 M1146.1 384.4h1.6 M1156.1 384.4h1.6 M1166.1 384.4h1.6 M1176.1 384.4h1.6 M1186.1 384.4h1.6 M1196.1 384.4h1.6 M1206.1 384.4h1.6 M1216.1 384.4h1.6 M1226.1 384.4h1.6 M1236.1 384.4h1.6 M1246.1 384.4h1.6 M1256.1 384.4h1.6 M1266.1 384.4h1.6 M1276.1 384.4h1.6 M1286.1 384.4h1.6 M1296.1 384.4h1.6 M1306.1 384.4h1.6 M1316.1 384.4h1.6 M1326.1 384.4h1.6 M1336.1 384.4h1.6 M1346.1 384.4h1.6 M1356.1 384.4h1.6 M1366.1 384.4h1.6 M1376.1 384.4h1.6 M116.1 394.4h1.6 M126.1 394.4h1.6 M136.1 394.4h1.6 M146.1 394.4h1.6 M156.1 394.4h1.6 M166.1 394.4h1.6 M176.1 394.4h1.6 M186.1 394.4h1.6 M196.1 394.4h1.6 M206.1 394.4h1.6 M216.1 394.4h1.6 M226.1 394.4h1.6 M236.1 394.4h1.6 M246.1 394.4h1.6 M256.1 394.4h1.6 M266.1 394.4h1.6 M276.1 394.4h1.6 M286.1 394.4h1.6 M296.1 394.4h1.6 M306.1 394.4h1.6 M316.1 394.4h1.6 M326.1 394.4h1.6 M336.1 394.4h1.6 M346.1 394.4h1.6 M356.1 394.4h1.6 M366.1 394.4h1.6 M376.1 394.4h1.6 M386.1 394.4h1.6 M396.1 394.4h1.6 M406.1 394.4h1.6 M416.1 394.4h1.6 M426.1 394.4h1.6 M436.1 394.4h1.6 M446.1 394.4h1.6 M456.1 394.4h1.6 M466.1 394.4h1.6 M476.1 394.4h1.6 M486.1 394.4h1.6 M496.1 394.4h1.6 M506.1 394.4h1.6 M516.1 394.4h1.6 M526.1 394.4h1.6 M536.1 394.4h1.6 M546.1 394.4h1.6 M556.1 394.4h1.6 M566.1 394.4h1.6 M576.1 394.4h1.6 M586.1 394.4h1.6 M596.1 394.4h1.6 M606.1 394.4h1.6 M616.1 394.4h1.6 M626.1 394.4h1.6 M636.1 394.4h1.6 M646.1 394.4h1.6 M656.1 394.4h1.6 M666.1 394.4h1.6 M676.1 394.4h1.6 M686.1 394.4h1.6 M696.1 394.4h1.6 M706.1 394.4h1.6 M716.1 394.4h1.6 M726.1 394.4h1.6 M736.1 394.4h1.6 M746.1 394.4h1.6 M756.1 394.4h1.6 M766.1 394.4h1.6 M776.1 394.4h1.6 M786.1 394.4h1.6 M796.1 394.4h1.6 M806.1 394.4h1.6 M816.1 394.4h1.6 M826.1 394.4h1.6 M836.1 394.4h1.6 M846.1 394.4h1.6 M856.1 394.4h1.6 M866.1 394.4h1.6 M876.1 394.4h1.6 M886.1 394.4h1.6 M896.1 394.4h1.6 M906.1 394.4h1.6 M916.1 394.4h1.6 M926.1 394.4h1.6 M936.1 394.4h1.6 M946.1 394.4h1.6 M956.1 394.4h1.6 M966.1 394.4h1.6 M976.1 394.4h1.6 M986.1 394.4h1.6 M996.1 394.4h1.6 M1006.1 394.4h1.6 M1016.1 394.4h1.6 M1026.1 394.4h1.6 M1036.1 394.4h1.6 M1046.1 394.4h1.6 M1056.1 394.4h1.6 M1066.1 394.4h1.6 M1076.1 394.4h1.6 M1086.1 394.4h1.6 M1096.1 394.4h1.6 M1106.1 394.4h1.6 M1116.1 394.4h1.6 M1126.1 394.4h1.6 M1136.1 394.4h1.6 M1146.1 394.4h1.6 M1156.1 394.4h1.6 M1166.1 394.4h1.6 M1176.1 394.4h1.6 M1186.1 394.4h1.6 M1196.1 394.4h1.6 M1206.1 394.4h1.6 M1216.1 394.4h1.6 M1226.1 394.4h1.6 M1236.1 394.4h1.6 M1246.1 394.4h1.6 M1256.1 394.4h1.6 M1266.1 394.4h1.6 M1276.1 394.4h1.6 M1286.1 394.4h1.6 M1296.1 394.4h1.6 M1306.1 394.4h1.6 M1316.1 394.4h1.6 M1326.1 394.4h1.6 M1336.1 394.4h1.6 M1346.1 394.4h1.6 M1356.1 394.4h1.6 M1366.1 394.4h1.6 M1376.1 394.4h1.6 M116.1 404.4h1.6 M126.1 404.4h1.6 M136.1 404.4h1.6 M146.1 404.4h1.6 M156.1 404.4h1.6 M166.1 404.4h1.6 M176.1 404.4h1.6 M186.1 404.4h1.6 M196.1 404.4h1.6 M206.1 404.4h1.6 M216.1 404.4h1.6 M226.1 404.4h1.6 M236.1 404.4h1.6 M246.1 404.4h1.6 M256.1 404.4h1.6 M266.1 404.4h1.6 M276.1 404.4h1.6 M286.1 404.4h1.6 M296.1 404.4h1.6 M306.1 404.4h1.6 M316.1 404.4h1.6 M326.1 404.4h1.6 M336.1 404.4h1.6 M346.1 404.4h1.6 M356.1 404.4h1.6 M366.1 404.4h1.6 M376.1 404.4h1.6 M386.1 404.4h1.6 M396.1 404.4h1.6 M406.1 404.4h1.6 M416.1 404.4h1.6 M426.1 404.4h1.6 M436.1 404.4h1.6 M446.1 404.4h1.6 M456.1 404.4h1.6 M466.1 404.4h1.6 M476.1 404.4h1.6 M486.1 404.4h1.6 M496.1 404.4h1.6 M506.1 404.4h1.6 M516.1 404.4h1.6 M526.1 404.4h1.6 M536.1 404.4h1.6 M546.1 404.4h1.6 M556.1 404.4h1.6 M566.1 404.4h1.6 M576.1 404.4h1.6 M586.1 404.4h1.6 M596.1 404.4h1.6 M606.1 404.4h1.6 M616.1 404.4h1.6 M626.1 404.4h1.6 M636.1 404.4h1.6 M646.1 404.4h1.6 M656.1 404.4h1.6 M666.1 404.4h1.6 M676.1 404.4h1.6 M686.1 404.4h1.6 M696.1 404.4h1.6 M706.1 404.4h1.6 M716.1 404.4h1.6 M726.1 404.4h1.6 M736.1 404.4h1.6 M746.1 404.4h1.6 M756.1 404.4h1.6 M766.1 404.4h1.6 M776.1 404.4h1.6 M786.1 404.4h1.6 M796.1 404.4h1.6 M806.1 404.4h1.6 M816.1 404.4h1.6 M826.1 404.4h1.6 M836.1 404.4h1.6 M846.1 404.4h1.6 M856.1 404.4h1.6 M866.1 404.4h1.6 M876.1 404.4h1.6 M886.1 404.4h1.6 M896.1 404.4h1.6 M906.1 404.4h1.6 M916.1 404.4h1.6 M926.1 404.4h1.6 M936.1 404.4h1.6 M946.1 404.4h1.6 M956.1 404.4h1.6 M966.1 404.4h1.6 M976.1 404.4h1.6 M986.1 404.4h1.6 M996.1 404.4h1.6 M1006.1 404.4h1.6 M1016.1 404.4h1.6 M1026.1 404.4h1.6 M1036.1 404.4h1.6 M1046.1 404.4h1.6 M1056.1 404.4h1.6 M1066.1 404.4h1.6 M1076.1 404.4h1.6 M1086.1 404.4h1.6 M1096.1 404.4h1.6 M1106.1 404.4h1.6 M1116.1 404.4h1.6 M1126.1 404.4h1.6 M1136.1 404.4h1.6 M1146.1 404.4h1.6 M1156.1 404.4h1.6 M1166.1 404.4h1.6 M1176.1 404.4h1.6 M1186.1 404.4h1.6 M1196.1 404.4h1.6 M1206.1 404.4h1.6 M1216.1 404.4h1.6 M1226.1 404.4h1.6 M1236.1 404.4h1.6 M1246.1 404.4h1.6 M1256.1 404.4h1.6 M1266.1 404.4h1.6 M1276.1 404.4h1.6 M1286.1 404.4h1.6 M1296.1 404.4h1.6 M1306.1 404.4h1.6 M1316.1 404.4h1.6 M1326.1 404.4h1.6 M1336.1 404.4h1.6 M1346.1 404.4h1.6 M1356.1 404.4h1.6 M1366.1 404.4h1.6 M1376.1 404.4h1.6 M116.1 414.4h1.6 M126.1 414.4h1.6 M136.1 414.4h1.6 M146.1 414.4h1.6 M156.1 414.4h1.6 M166.1 414.4h1.6 M176.1 414.4h1.6 M186.1 414.4h1.6 M196.1 414.4h1.6 M206.1 414.4h1.6 M216.1 414.4h1.6 M226.1 414.4h1.6 M236.1 414.4h1.6 M246.1 414.4h1.6 M256.1 414.4h1.6 M266.1 414.4h1.6 M276.1 414.4h1.6 M286.1 414.4h1.6 M296.1 414.4h1.6 M306.1 414.4h1.6 M316.1 414.4h1.6 M326.1 414.4h1.6 M336.1 414.4h1.6 M346.1 414.4h1.6 M356.1 414.4h1.6 M366.1 414.4h1.6 M376.1 414.4h1.6 M386.1 414.4h1.6 M396.1 414.4h1.6 M406.1 414.4h1.6 M416.1 414.4h1.6 M426.1 414.4h1.6 M436.1 414.4h1.6 M446.1 414.4h1.6 M456.1 414.4h1.6 M466.1 414.4h1.6 M476.1 414.4h1.6 M486.1 414.4h1.6 M496.1 414.4h1.6 M506.1 414.4h1.6 M516.1 414.4h1.6 M526.1 414.4h1.6 M536.1 414.4h1.6 M546.1 414.4h1.6 M556.1 414.4h1.6 M566.1 414.4h1.6 M576.1 414.4h1.6 M586.1 414.4h1.6 M596.1 414.4h1.6 M606.1 414.4h1.6 M616.1 414.4h1.6 M626.1 414.4h1.6 M636.1 414.4h1.6 M646.1 414.4h1.6 M656.1 414.4h1.6 M666.1 414.4h1.6 M676.1 414.4h1.6 M686.1 414.4h1.6 M696.1 414.4h1.6 M706.1 414.4h1.6 M716.1 414.4h1.6 M726.1 414.4h1.6 M736.1 414.4h1.6 M746.1 414.4h1.6 M756.1 414.4h1.6 M766.1 414.4h1.6 M776.1 414.4h1.6 M786.1 414.4h1.6 M796.1 414.4h1.6 M806.1 414.4h1.6 M816.1 414.4h1.6 M826.1 414.4h1.6 M836.1 414.4h1.6 M846.1 414.4h1.6 M856.1 414.4h1.6 M866.1 414.4h1.6 M876.1 414.4h1.6 M886.1 414.4h1.6 M896.1 414.4h1.6 M906.1 414.4h1.6 M916.1 414.4h1.6 M926.1 414.4h1.6 M936.1 414.4h1.6 M946.1 414.4h1.6 M956.1 414.4h1.6 M966.1 414.4h1.6 M976.1 414.4h1.6 M986.1 414.4h1.6 M996.1 414.4h1.6 M1006.1 414.4h1.6 M1016.1 414.4h1.6 M1026.1 414.4h1.6 M1036.1 414.4h1.6 M1046.1 414.4h1.6 M1056.1 414.4h1.6 M1066.1 414.4h1.6 M1076.1 414.4h1.6 M1086.1 414.4h1.6 M1096.1 414.4h1.6 M1106.1 414.4h1.6 M1116.1 414.4h1.6 M1126.1 414.4h1.6 M1136.1 414.4h1.6 M1146.1 414.4h1.6 M1156.1 414.4h1.6 M1166.1 414.4h1.6 M1176.1 414.4h1.6 M1186.1 414.4h1.6 M1196.1 414.4h1.6 M1206.1 414.4h1.6 M1216.1 414.4h1.6 M1226.1 414.4h1.6 M1236.1 414.4h1.6 M1246.1 414.4h1.6 M1256.1 414.4h1.6 M1266.1 414.4h1.6 M1276.1 414.4h1.6 M1286.1 414.4h1.6 M1296.1 414.4h1.6 M1306.1 414.4h1.6 M1316.1 414.4h1.6 M1326.1 414.4h1.6 M1336.1 414.4h1.6 M1346.1 414.4h1.6 M1356.1 414.4h1.6 M1366.1 414.4h1.6 M1376.1 414.4h1.6 M116.1 424.4h1.6 M126.1 424.4h1.6 M136.1 424.4h1.6 M146.1 424.4h1.6 M156.1 424.4h1.6 M166.1 424.4h1.6 M176.1 424.4h1.6 M186.1 424.4h1.6 M196.1 424.4h1.6 M206.1 424.4h1.6 M216.1 424.4h1.6 M226.1 424.4h1.6 M236.1 424.4h1.6 M246.1 424.4h1.6 M256.1 424.4h1.6 M266.1 424.4h1.6 M276.1 424.4h1.6 M286.1 424.4h1.6 M296.1 424.4h1.6 M306.1 424.4h1.6 M316.1 424.4h1.6 M326.1 424.4h1.6 M336.1 424.4h1.6 M346.1 424.4h1.6 M356.1 424.4h1.6 M366.1 424.4h1.6 M376.1 424.4h1.6 M386.1 424.4h1.6 M396.1 424.4h1.6 M406.1 424.4h1.6 M416.1 424.4h1.6 M426.1 424.4h1.6 M436.1 424.4h1.6 M446.1 424.4h1.6 M456.1 424.4h1.6 M466.1 424.4h1.6 M476.1 424.4h1.6 M486.1 424.4h1.6 M496.1 424.4h1.6 M506.1 424.4h1.6 M516.1 424.4h1.6 M526.1 424.4h1.6 M536.1 424.4h1.6 M546.1 424.4h1.6 M556.1 424.4h1.6 M566.1 424.4h1.6 M576.1 424.4h1.6 M586.1 424.4h1.6 M596.1 424.4h1.6 M606.1 424.4h1.6 M616.1 424.4h1.6 M626.1 424.4h1.6 M636.1 424.4h1.6 M646.1 424.4h1.6 M656.1 424.4h1.6 M666.1 424.4h1.6 M676.1 424.4h1.6 M686.1 424.4h1.6 M696.1 424.4h1.6 M706.1 424.4h1.6 M716.1 424.4h1.6 M726.1 424.4h1.6 M736.1 424.4h1.6 M746.1 424.4h1.6 M756.1 424.4h1.6 M766.1 424.4h1.6 M776.1 424.4h1.6 M786.1 424.4h1.6 M796.1 424.4h1.6 M806.1 424.4h1.6 M816.1 424.4h1.6 M826.1 424.4h1.6 M836.1 424.4h1.6 M846.1 424.4h1.6 M856.1 424.4h1.6 M866.1 424.4h1.6 M876.1 424.4h1.6 M886.1 424.4h1.6 M896.1 424.4h1.6 M906.1 424.4h1.6 M916.1 424.4h1.6 M926.1 424.4h1.6 M936.1 424.4h1.6 M946.1 424.4h1.6 M956.1 424.4h1.6 M966.1 424.4h1.6 M976.1 424.4h1.6 M986.1 424.4h1.6 M996.1 424.4h1.6 M1006.1 424.4h1.6 M1016.1 424.4h1.6 M1026.1 424.4h1.6 M1036.1 424.4h1.6 M1046.1 424.4h1.6 M1056.1 424.4h1.6 M1066.1 424.4h1.6 M1076.1 424.4h1.6 M1086.1 424.4h1.6 M1096.1 424.4h1.6 M1106.1 424.4h1.6 M1116.1 424.4h1.6 M1126.1 424.4h1.6 M1136.1 424.4h1.6 M1146.1 424.4h1.6 M1156.1 424.4h1.6 M1166.1 424.4h1.6 M1176.1 424.4h1.6 M1186.1 424.4h1.6 M1196.1 424.4h1.6 M1206.1 424.4h1.6 M1216.1 424.4h1.6 M1226.1 424.4h1.6 M1236.1 424.4h1.6 M1246.1 424.4h1.6 M1256.1 424.4h1.6 M1266.1 424.4h1.6 M1276.1 424.4h1.6 M1286.1 424.4h1.6 M1296.1 424.4h1.6 M1306.1 424.4h1.6 M1316.1 424.4h1.6 M1326.1 424.4h1.6 M1336.1 424.4h1.6 M1346.1 424.4h1.6 M1356.1 424.4h1.6 M1366.1 424.4h1.6 M1376.1 424.4h1.6 M116.1 434.4h1.6 M126.1 434.4h1.6 M136.1 434.4h1.6 M146.1 434.4h1.6 M156.1 434.4h1.6 M166.1 434.4h1.6 M176.1 434.4h1.6 M186.1 434.4h1.6 M196.1 434.4h1.6 M206.1 434.4h1.6 M216.1 434.4h1.6 M226.1 434.4h1.6 M236.1 434.4h1.6 M246.1 434.4h1.6 M256.1 434.4h1.6 M266.1 434.4h1.6 M276.1 434.4h1.6 M286.1 434.4h1.6 M296.1 434.4h1.6 M306.1 434.4h1.6 M316.1 434.4h1.6 M326.1 434.4h1.6 M336.1 434.4h1.6 M346.1 434.4h1.6 M356.1 434.4h1.6 M366.1 434.4h1.6 M376.1 434.4h1.6 M386.1 434.4h1.6 M396.1 434.4h1.6 M406.1 434.4h1.6 M416.1 434.4h1.6 M426.1 434.4h1.6 M436.1 434.4h1.6 M446.1 434.4h1.6 M456.1 434.4h1.6 M466.1 434.4h1.6 M476.1 434.4h1.6 M486.1 434.4h1.6 M496.1 434.4h1.6 M506.1 434.4h1.6 M516.1 434.4h1.6 M526.1 434.4h1.6 M536.1 434.4h1.6 M546.1 434.4h1.6 M556.1 434.4h1.6 M566.1 434.4h1.6 M576.1 434.4h1.6 M586.1 434.4h1.6 M596.1 434.4h1.6 M606.1 434.4h1.6 M616.1 434.4h1.6 M626.1 434.4h1.6 M636.1 434.4h1.6 M646.1 434.4h1.6 M656.1 434.4h1.6 M666.1 434.4h1.6 M676.1 434.4h1.6 M686.1 434.4h1.6 M696.1 434.4h1.6 M706.1 434.4h1.6 M716.1 434.4h1.6 M726.1 434.4h1.6 M736.1 434.4h1.6 M746.1 434.4h1.6 M756.1 434.4h1.6 M766.1 434.4h1.6 M776.1 434.4h1.6 M786.1 434.4h1.6 M796.1 434.4h1.6 M806.1 434.4h1.6 M816.1 434.4h1.6 M826.1 434.4h1.6 M836.1 434.4h1.6 M846.1 434.4h1.6 M856.1 434.4h1.6 M866.1 434.4h1.6 M876.1 434.4h1.6 M886.1 434.4h1.6 M896.1 434.4h1.6 M906.1 434.4h1.6 M916.1 434.4h1.6 M926.1 434.4h1.6 M936.1 434.4h1.6 M946.1 434.4h1.6 M956.1 434.4h1.6 M966.1 434.4h1.6 M976.1 434.4h1.6 M986.1 434.4h1.6 M996.1 434.4h1.6 M1006.1 434.4h1.6 M1016.1 434.4h1.6 M1026.1 434.4h1.6 M1036.1 434.4h1.6 M1046.1 434.4h1.6 M1056.1 434.4h1.6 M1066.1 434.4h1.6 M1076.1 434.4h1.6 M1086.1 434.4h1.6 M1096.1 434.4h1.6 M1106.1 434.4h1.6 M1116.1 434.4h1.6 M1126.1 434.4h1.6 M1136.1 434.4h1.6 M1146.1 434.4h1.6 M1156.1 434.4h1.6 M1166.1 434.4h1.6 M1176.1 434.4h1.6 M1186.1 434.4h1.6 M1196.1 434.4h1.6 M1206.1 434.4h1.6 M1216.1 434.4h1.6 M1226.1 434.4h1.6 M1236.1 434.4h1.6 M1246.1 434.4h1.6 M1256.1 434.4h1.6 M1266.1 434.4h1.6 M1276.1 434.4h1.6 M1286.1 434.4h1.6 M1296.1 434.4h1.6 M1306.1 434.4h1.6 M1316.1 434.4h1.6 M1326.1 434.4h1.6 M1336.1 434.4h1.6 M1346.1 434.4h1.6 M1356.1 434.4h1.6 M1366.1 434.4h1.6 M1376.1 434.4h1.6 M116.1 444.4h1.6 M126.1 444.4h1.6 M136.1 444.4h1.6 M146.1 444.4h1.6 M156.1 444.4h1.6 M166.1 444.4h1.6 M176.1 444.4h1.6 M186.1 444.4h1.6 M196.1 444.4h1.6 M206.1 444.4h1.6 M216.1 444.4h1.6 M226.1 444.4h1.6 M236.1 444.4h1.6 M246.1 444.4h1.6 M256.1 444.4h1.6 M266.1 444.4h1.6 M276.1 444.4h1.6 M286.1 444.4h1.6 M296.1 444.4h1.6 M306.1 444.4h1.6 M316.1 444.4h1.6 M326.1 444.4h1.6 M336.1 444.4h1.6 M346.1 444.4h1.6 M356.1 444.4h1.6 M366.1 444.4h1.6 M376.1 444.4h1.6 M386.1 444.4h1.6 M396.1 444.4h1.6 M406.1 444.4h1.6 M416.1 444.4h1.6 M426.1 444.4h1.6 M436.1 444.4h1.6 M446.1 444.4h1.6 M456.1 444.4h1.6 M466.1 444.4h1.6 M476.1 444.4h1.6 M486.1 444.4h1.6 M496.1 444.4h1.6 M506.1 444.4h1.6 M516.1 444.4h1.6 M526.1 444.4h1.6 M536.1 444.4h1.6 M546.1 444.4h1.6 M556.1 444.4h1.6 M566.1 444.4h1.6 M576.1 444.4h1.6 M586.1 444.4h1.6 M596.1 444.4h1.6 M606.1 444.4h1.6 M616.1 444.4h1.6 M626.1 444.4h1.6 M636.1 444.4h1.6 M646.1 444.4h1.6 M656.1 444.4h1.6 M666.1 444.4h1.6 M676.1 444.4h1.6 M686.1 444.4h1.6 M696.1 444.4h1.6 M706.1 444.4h1.6 M716.1 444.4h1.6 M726.1 444.4h1.6 M736.1 444.4h1.6 M746.1 444.4h1.6 M756.1 444.4h1.6 M766.1 444.4h1.6 M776.1 444.4h1.6 M786.1 444.4h1.6 M796.1 444.4h1.6 M806.1 444.4h1.6 M816.1 444.4h1.6 M826.1 444.4h1.6 M836.1 444.4h1.6 M846.1 444.4h1.6 M856.1 444.4h1.6 M866.1 444.4h1.6 M876.1 444.4h1.6 M886.1 444.4h1.6 M896.1 444.4h1.6 M906.1 444.4h1.6 M916.1 444.4h1.6 M926.1 444.4h1.6 M936.1 444.4h1.6 M946.1 444.4h1.6 M956.1 444.4h1.6 M966.1 444.4h1.6 M976.1 444.4h1.6 M986.1 444.4h1.6 M996.1 444.4h1.6 M1006.1 444.4h1.6 M1016.1 444.4h1.6 M1026.1 444.4h1.6 M1036.1 444.4h1.6 M1046.1 444.4h1.6 M1056.1 444.4h1.6 M1066.1 444.4h1.6 M1076.1 444.4h1.6 M1086.1 444.4h1.6 M1096.1 444.4h1.6 M1106.1 444.4h1.6 M1116.1 444.4h1.6 M1126.1 444.4h1.6 M1136.1 444.4h1.6 M1146.1 444.4h1.6 M1156.1 444.4h1.6 M1166.1 444.4h1.6 M1176.1 444.4h1.6 M1186.1 444.4h1.6 M1196.1 444.4h1.6 M1206.1 444.4h1.6 M1216.1 444.4h1.6 M1226.1 444.4h1.6 M1236.1 444.4h1.6 M1246.1 444.4h1.6 M1256.1 444.4h1.6 M1266.1 444.4h1.6 M1276.1 444.4h1.6 M1286.1 444.4h1.6 M1296.1 444.4h1.6 M1306.1 444.4h1.6 M1316.1 444.4h1.6 M1326.1 444.4h1.6 M1336.1 444.4h1.6 M1346.1 444.4h1.6 M1356.1 444.4h1.6 M1366.1 444.4h1.6 M1376.1 444.4h1.6 M116.1 454.4h1.6 M126.1 454.4h1.6 M136.1 454.4h1.6 M146.1 454.4h1.6 M156.1 454.4h1.6 M166.1 454.4h1.6 M176.1 454.4h1.6 M186.1 454.4h1.6 M196.1 454.4h1.6 M206.1 454.4h1.6 M216.1 454.4h1.6 M226.1 454.4h1.6 M236.1 454.4h1.6 M246.1 454.4h1.6 M256.1 454.4h1.6 M266.1 454.4h1.6 M276.1 454.4h1.6 M286.1 454.4h1.6 M296.1 454.4h1.6 M306.1 454.4h1.6 M316.1 454.4h1.6 M326.1 454.4h1.6 M336.1 454.4h1.6 M346.1 454.4h1.6 M356.1 454.4h1.6 M366.1 454.4h1.6 M376.1 454.4h1.6 M386.1 454.4h1.6 M396.1 454.4h1.6 M406.1 454.4h1.6 M416.1 454.4h1.6 M426.1 454.4h1.6 M436.1 454.4h1.6 M446.1 454.4h1.6 M456.1 454.4h1.6 M466.1 454.4h1.6 M476.1 454.4h1.6 M486.1 454.4h1.6 M496.1 454.4h1.6 M506.1 454.4h1.6 M516.1 454.4h1.6 M526.1 454.4h1.6 M536.1 454.4h1.6 M546.1 454.4h1.6 M556.1 454.4h1.6 M566.1 454.4h1.6 M576.1 454.4h1.6 M586.1 454.4h1.6 M596.1 454.4h1.6 M606.1 454.4h1.6 M616.1 454.4h1.6 M626.1 454.4h1.6 M636.1 454.4h1.6 M646.1 454.4h1.6 M656.1 454.4h1.6 M666.1 454.4h1.6 M676.1 454.4h1.6 M686.1 454.4h1.6 M696.1 454.4h1.6 M706.1 454.4h1.6 M716.1 454.4h1.6 M726.1 454.4h1.6 M736.1 454.4h1.6 M746.1 454.4h1.6 M756.1 454.4h1.6 M766.1 454.4h1.6 M776.1 454.4h1.6 M786.1 454.4h1.6 M796.1 454.4h1.6 M806.1 454.4h1.6 M816.1 454.4h1.6 M826.1 454.4h1.6 M836.1 454.4h1.6 M846.1 454.4h1.6 M856.1 454.4h1.6 M866.1 454.4h1.6 M876.1 454.4h1.6 M886.1 454.4h1.6 M896.1 454.4h1.6 M906.1 454.4h1.6 M916.1 454.4h1.6 M926.1 454.4h1.6 M936.1 454.4h1.6 M946.1 454.4h1.6 M956.1 454.4h1.6 M966.1 454.4h1.6 M976.1 454.4h1.6 M986.1 454.4h1.6 M996.1 454.4h1.6 M1006.1 454.4h1.6 M1016.1 454.4h1.6 M1026.1 454.4h1.6 M1036.1 454.4h1.6 M1046.1 454.4h1.6 M1056.1 454.4h1.6 M1066.1 454.4h1.6 M1076.1 454.4h1.6 M1086.1 454.4h1.6 M1096.1 454.4h1.6 M1106.1 454.4h1.6 M1116.1 454.4h1.6 M1126.1 454.4h1.6 M1136.1 454.4h1.6 M1146.1 454.4h1.6 M1156.1 454.4h1.6 M1166.1 454.4h1.6 M1176.1 454.4h1.6 M1186.1 454.4h1.6 M1196.1 454.4h1.6 M1206.1 454.4h1.6 M1216.1 454.4h1.6 M1226.1 454.4h1.6 M1236.1 454.4h1.6 M1246.1 454.4h1.6 M1256.1 454.4h1.6 M1266.1 454.4h1.6 M1276.1 454.4h1.6 M1286.1 454.4h1.6 M1296.1 454.4h1.6 M1306.1 454.4h1.6 M1316.1 454.4h1.6 M1326.1 454.4h1.6 M1336.1 454.4h1.6 M1346.1 454.4h1.6 M1356.1 454.4h1.6 M1366.1 454.4h1.6 M1376.1 454.4h1.6 M116.1 464.4h1.6 M126.1 464.4h1.6 M136.1 464.4h1.6 M146.1 464.4h1.6 M156.1 464.4h1.6 M166.1 464.4h1.6 M176.1 464.4h1.6 M186.1 464.4h1.6 M196.1 464.4h1.6 M206.1 464.4h1.6 M216.1 464.4h1.6 M226.1 464.4h1.6 M236.1 464.4h1.6 M246.1 464.4h1.6 M256.1 464.4h1.6 M266.1 464.4h1.6 M276.1 464.4h1.6 M286.1 464.4h1.6 M296.1 464.4h1.6 M306.1 464.4h1.6 M316.1 464.4h1.6 M326.1 464.4h1.6 M336.1 464.4h1.6 M346.1 464.4h1.6 M356.1 464.4h1.6 M366.1 464.4h1.6 M376.1 464.4h1.6 M386.1 464.4h1.6 M396.1 464.4h1.6 M406.1 464.4h1.6 M416.1 464.4h1.6 M426.1 464.4h1.6 M436.1 464.4h1.6 M446.1 464.4h1.6 M456.1 464.4h1.6 M466.1 464.4h1.6 M476.1 464.4h1.6 M486.1 464.4h1.6 M496.1 464.4h1.6 M506.1 464.4h1.6 M516.1 464.4h1.6 M526.1 464.4h1.6 M536.1 464.4h1.6 M546.1 464.4h1.6 M556.1 464.4h1.6 M566.1 464.4h1.6 M576.1 464.4h1.6 M586.1 464.4h1.6 M596.1 464.4h1.6 M606.1 464.4h1.6 M616.1 464.4h1.6 M626.1 464.4h1.6 M636.1 464.4h1.6 M646.1 464.4h1.6 M656.1 464.4h1.6 M666.1 464.4h1.6 M676.1 464.4h1.6 M686.1 464.4h1.6 M696.1 464.4h1.6 M706.1 464.4h1.6 M716.1 464.4h1.6 M726.1 464.4h1.6 M736.1 464.4h1.6 M746.1 464.4h1.6 M756.1 464.4h1.6 M766.1 464.4h1.6 M776.1 464.4h1.6 M786.1 464.4h1.6 M796.1 464.4h1.6 M806.1 464.4h1.6 M816.1 464.4h1.6 M826.1 464.4h1.6 M836.1 464.4h1.6 M846.1 464.4h1.6 M856.1 464.4h1.6 M866.1 464.4h1.6 M876.1 464.4h1.6 M886.1 464.4h1.6 M896.1 464.4h1.6 M906.1 464.4h1.6 M916.1 464.4h1.6 M926.1 464.4h1.6 M936.1 464.4h1.6 M946.1 464.4h1.6 M956.1 464.4h1.6 M966.1 464.4h1.6 M976.1 464.4h1.6 M986.1 464.4h1.6 M996.1 464.4h1.6 M1006.1 464.4h1.6 M1016.1 464.4h1.6 M1026.1 464.4h1.6 M1036.1 464.4h1.6 M1046.1 464.4h1.6 M1056.1 464.4h1.6 M1066.1 464.4h1.6 M1076.1 464.4h1.6 M1086.1 464.4h1.6 M1096.1 464.4h1.6 M1106.1 464.4h1.6 M1116.1 464.4h1.6 M1126.1 464.4h1.6 M1136.1 464.4h1.6 M1146.1 464.4h1.6 M1156.1 464.4h1.6 M1166.1 464.4h1.6 M1176.1 464.4h1.6 M1186.1 464.4h1.6 M1196.1 464.4h1.6 M1206.1 464.4h1.6 M1216.1 464.4h1.6 M1226.1 464.4h1.6 M1236.1 464.4h1.6 M1246.1 464.4h1.6 M1256.1 464.4h1.6 M1266.1 464.4h1.6 M1276.1 464.4h1.6 M1286.1 464.4h1.6 M1296.1 464.4h1.6 M1306.1 464.4h1.6 M1316.1 464.4h1.6 M1326.1 464.4h1.6 M1336.1 464.4h1.6 M1346.1 464.4h1.6 M1356.1 464.4h1.6 M1366.1 464.4h1.6 M1376.1 464.4h1.6 M116.1 474.4h1.6 M126.1 474.4h1.6 M136.1 474.4h1.6 M146.1 474.4h1.6 M156.1 474.4h1.6 M166.1 474.4h1.6 M176.1 474.4h1.6 M186.1 474.4h1.6 M196.1 474.4h1.6 M206.1 474.4h1.6 M216.1 474.4h1.6 M226.1 474.4h1.6 M236.1 474.4h1.6 M246.1 474.4h1.6 M256.1 474.4h1.6 M266.1 474.4h1.6 M276.1 474.4h1.6 M286.1 474.4h1.6 M296.1 474.4h1.6 M306.1 474.4h1.6 M316.1 474.4h1.6 M326.1 474.4h1.6 M336.1 474.4h1.6 M346.1 474.4h1.6 M356.1 474.4h1.6 M366.1 474.4h1.6 M376.1 474.4h1.6 M386.1 474.4h1.6 M396.1 474.4h1.6 M406.1 474.4h1.6 M416.1 474.4h1.6 M426.1 474.4h1.6 M436.1 474.4h1.6 M446.1 474.4h1.6 M456.1 474.4h1.6 M466.1 474.4h1.6 M476.1 474.4h1.6 M486.1 474.4h1.6 M496.1 474.4h1.6 M506.1 474.4h1.6 M516.1 474.4h1.6 M526.1 474.4h1.6 M536.1 474.4h1.6 M546.1 474.4h1.6 M556.1 474.4h1.6 M566.1 474.4h1.6 M576.1 474.4h1.6 M586.1 474.4h1.6 M596.1 474.4h1.6 M606.1 474.4h1.6 M616.1 474.4h1.6 M626.1 474.4h1.6 M636.1 474.4h1.6 M646.1 474.4h1.6 M656.1 474.4h1.6 M666.1 474.4h1.6 M676.1 474.4h1.6 M686.1 474.4h1.6 M696.1 474.4h1.6 M706.1 474.4h1.6 M716.1 474.4h1.6 M726.1 474.4h1.6 M736.1 474.4h1.6 M746.1 474.4h1.6 M756.1 474.4h1.6 M766.1 474.4h1.6 M776.1 474.4h1.6 M786.1 474.4h1.6 M796.1 474.4h1.6 M806.1 474.4h1.6 M816.1 474.4h1.6 M826.1 474.4h1.6 M836.1 474.4h1.6 M846.1 474.4h1.6 M856.1 474.4h1.6 M866.1 474.4h1.6 M876.1 474.4h1.6 M886.1 474.4h1.6 M896.1 474.4h1.6 M906.1 474.4h1.6 M916.1 474.4h1.6 M926.1 474.4h1.6 M936.1 474.4h1.6 M946.1 474.4h1.6 M956.1 474.4h1.6 M966.1 474.4h1.6 M976.1 474.4h1.6 M986.1 474.4h1.6 M996.1 474.4h1.6 M1006.1 474.4h1.6 M1016.1 474.4h1.6 M1026.1 474.4h1.6 M1036.1 474.4h1.6 M1046.1 474.4h1.6 M1056.1 474.4h1.6 M1066.1 474.4h1.6 M1076.1 474.4h1.6 M1086.1 474.4h1.6 M1096.1 474.4h1.6 M1106.1 474.4h1.6 M1116.1 474.4h1.6 M1126.1 474.4h1.6 M1136.1 474.4h1.6 M1146.1 474.4h1.6 M1156.1 474.4h1.6 M1166.1 474.4h1.6 M1176.1 474.4h1.6 M1186.1 474.4h1.6 M1196.1 474.4h1.6 M1206.1 474.4h1.6 M1216.1 474.4h1.6 M1226.1 474.4h1.6 M1236.1 474.4h1.6 M1246.1 474.4h1.6 M1256.1 474.4h1.6 M1266.1 474.4h1.6 M1276.1 474.4h1.6 M1286.1 474.4h1.6 M1296.1 474.4h1.6 M1306.1 474.4h1.6 M1316.1 474.4h1.6 M1326.1 474.4h1.6 M1336.1 474.4h1.6 M1346.1 474.4h1.6 M1356.1 474.4h1.6 M1366.1 474.4h1.6 M1376.1 474.4h1.6 M116.1 484.4h1.6 M126.1 484.4h1.6 M136.1 484.4h1.6 M146.1 484.4h1.6 M156.1 484.4h1.6 M166.1 484.4h1.6 M176.1 484.4h1.6 M186.1 484.4h1.6 M196.1 484.4h1.6 M206.1 484.4h1.6 M216.1 484.4h1.6 M226.1 484.4h1.6 M236.1 484.4h1.6 M246.1 484.4h1.6 M256.1 484.4h1.6 M266.1 484.4h1.6 M276.1 484.4h1.6 M286.1 484.4h1.6 M296.1 484.4h1.6 M306.1 484.4h1.6 M316.1 484.4h1.6 M326.1 484.4h1.6 M336.1 484.4h1.6 M346.1 484.4h1.6 M356.1 484.4h1.6 M366.1 484.4h1.6 M376.1 484.4h1.6 M386.1 484.4h1.6 M396.1 484.4h1.6 M406.1 484.4h1.6 M416.1 484.4h1.6 M426.1 484.4h1.6 M436.1 484.4h1.6 M446.1 484.4h1.6 M456.1 484.4h1.6 M466.1 484.4h1.6 M476.1 484.4h1.6 M486.1 484.4h1.6 M496.1 484.4h1.6 M506.1 484.4h1.6 M516.1 484.4h1.6 M526.1 484.4h1.6 M536.1 484.4h1.6 M546.1 484.4h1.6 M556.1 484.4h1.6 M566.1 484.4h1.6 M576.1 484.4h1.6 M586.1 484.4h1.6 M596.1 484.4h1.6 M606.1 484.4h1.6 M616.1 484.4h1.6 M626.1 484.4h1.6 M636.1 484.4h1.6 M646.1 484.4h1.6 M656.1 484.4h1.6 M666.1 484.4h1.6 M676.1 484.4h1.6 M686.1 484.4h1.6 M696.1 484.4h1.6 M706.1 484.4h1.6 M716.1 484.4h1.6 M726.1 484.4h1.6 M736.1 484.4h1.6 M746.1 484.4h1.6 M756.1 484.4h1.6 M766.1 484.4h1.6 M776.1 484.4h1.6 M786.1 484.4h1.6 M796.1 484.4h1.6 M806.1 484.4h1.6 M816.1 484.4h1.6 M826.1 484.4h1.6 M836.1 484.4h1.6 M846.1 484.4h1.6 M856.1 484.4h1.6 M866.1 484.4h1.6 M876.1 484.4h1.6 M886.1 484.4h1.6 M896.1 484.4h1.6 M906.1 484.4h1.6 M916.1 484.4h1.6 M926.1 484.4h1.6 M936.1 484.4h1.6 M946.1 484.4h1.6 M956.1 484.4h1.6 M966.1 484.4h1.6 M976.1 484.4h1.6 M986.1 484.4h1.6 M996.1 484.4h1.6 M1006.1 484.4h1.6 M1016.1 484.4h1.6 M1026.1 484.4h1.6 M1036.1 484.4h1.6 M1046.1 484.4h1.6 M1056.1 484.4h1.6 M1066.1 484.4h1.6 M1076.1 484.4h1.6 M1086.1 484.4h1.6 M1096.1 484.4h1.6 M1106.1 484.4h1.6 M1116.1 484.4h1.6 M1126.1 484.4h1.6 M1136.1 484.4h1.6 M1146.1 484.4h1.6 M1156.1 484.4h1.6 M1166.1 484.4h1.6 M1176.1 484.4h1.6 M1186.1 484.4h1.6 M1196.1 484.4h1.6 M1206.1 484.4h1.6 M1216.1 484.4h1.6 M1226.1 484.4h1.6 M1236.1 484.4h1.6 M1246.1 484.4h1.6 M1256.1 484.4h1.6 M1266.1 484.4h1.6 M1276.1 484.4h1.6 M1286.1 484.4h1.6 M1296.1 484.4h1.6 M1306.1 484.4h1.6 M1316.1 484.4h1.6 M1326.1 484.4h1.6 M1336.1 484.4h1.6 M1346.1 484.4h1.6 M1356.1 484.4h1.6 M1366.1 484.4h1.6 M1376.1 484.4h1.6 M116.1 494.4h1.6 M126.1 494.4h1.6 M136.1 494.4h1.6 M146.1 494.4h1.6 M156.1 494.4h1.6 M166.1 494.4h1.6 M176.1 494.4h1.6 M186.1 494.4h1.6 M196.1 494.4h1.6 M206.1 494.4h1.6 M216.1 494.4h1.6 M226.1 494.4h1.6 M236.1 494.4h1.6 M246.1 494.4h1.6 M256.1 494.4h1.6 M266.1 494.4h1.6 M276.1 494.4h1.6 M286.1 494.4h1.6 M296.1 494.4h1.6 M306.1 494.4h1.6 M316.1 494.4h1.6 M326.1 494.4h1.6 M336.1 494.4h1.6 M346.1 494.4h1.6 M356.1 494.4h1.6 M366.1 494.4h1.6 M376.1 494.4h1.6 M386.1 494.4h1.6 M396.1 494.4h1.6 M406.1 494.4h1.6 M416.1 494.4h1.6 M426.1 494.4h1.6 M436.1 494.4h1.6 M446.1 494.4h1.6 M456.1 494.4h1.6 M466.1 494.4h1.6 M476.1 494.4h1.6 M486.1 494.4h1.6 M496.1 494.4h1.6 M506.1 494.4h1.6 M516.1 494.4h1.6 M526.1 494.4h1.6 M536.1 494.4h1.6 M546.1 494.4h1.6 M556.1 494.4h1.6 M566.1 494.4h1.6 M576.1 494.4h1.6 M586.1 494.4h1.6 M596.1 494.4h1.6 M606.1 494.4h1.6 M616.1 494.4h1.6 M626.1 494.4h1.6 M636.1 494.4h1.6 M646.1 494.4h1.6 M656.1 494.4h1.6 M666.1 494.4h1.6 M676.1 494.4h1.6 M686.1 494.4h1.6 M696.1 494.4h1.6 M706.1 494.4h1.6 M716.1 494.4h1.6 M726.1 494.4h1.6 M736.1 494.4h1.6 M746.1 494.4h1.6 M756.1 494.4h1.6 M766.1 494.4h1.6 M776.1 494.4h1.6 M786.1 494.4h1.6 M796.1 494.4h1.6 M806.1 494.4h1.6 M816.1 494.4h1.6 M826.1 494.4h1.6 M836.1 494.4h1.6 M846.1 494.4h1.6 M856.1 494.4h1.6 M866.1 494.4h1.6 M876.1 494.4h1.6 M886.1 494.4h1.6 M896.1 494.4h1.6 M906.1 494.4h1.6 M916.1 494.4h1.6 M926.1 494.4h1.6 M936.1 494.4h1.6 M946.1 494.4h1.6 M956.1 494.4h1.6 M966.1 494.4h1.6 M976.1 494.4h1.6 M986.1 494.4h1.6 M996.1 494.4h1.6 M1006.1 494.4h1.6 M1016.1 494.4h1.6 M1026.1 494.4h1.6 M1036.1 494.4h1.6 M1046.1 494.4h1.6 M1056.1 494.4h1.6 M1066.1 494.4h1.6 M1076.1 494.4h1.6 M1086.1 494.4h1.6 M1096.1 494.4h1.6 M1106.1 494.4h1.6 M1116.1 494.4h1.6 M1126.1 494.4h1.6 M1136.1 494.4h1.6 M1146.1 494.4h1.6 M1156.1 494.4h1.6 M1166.1 494.4h1.6 M1176.1 494.4h1.6 M1186.1 494.4h1.6 M1196.1 494.4h1.6 M1206.1 494.4h1.6 M1216.1 494.4h1.6 M1226.1 494.4h1.6 M1236.1 494.4h1.6 M1246.1 494.4h1.6 M1256.1 494.4h1.6 M1266.1 494.4h1.6 M1276.1 494.4h1.6 M1286.1 494.4h1.6 M1296.1 494.4h1.6 M1306.1 494.4h1.6 M1316.1 494.4h1.6 M1326.1 494.4h1.6 M1336.1 494.4h1.6 M1346.1 494.4h1.6 M1356.1 494.4h1.6 M1366.1 494.4h1.6 M1376.1 494.4h1.6 M116.1 504.4h1.6 M126.1 504.4h1.6 M136.1 504.4h1.6 M146.1 504.4h1.6 M156.1 504.4h1.6 M166.1 504.4h1.6 M176.1 504.4h1.6 M186.1 504.4h1.6 M196.1 504.4h1.6 M206.1 504.4h1.6 M216.1 504.4h1.6 M226.1 504.4h1.6 M236.1 504.4h1.6 M246.1 504.4h1.6 M256.1 504.4h1.6 M266.1 504.4h1.6 M276.1 504.4h1.6 M286.1 504.4h1.6 M296.1 504.4h1.6 M306.1 504.4h1.6 M316.1 504.4h1.6 M326.1 504.4h1.6 M336.1 504.4h1.6 M346.1 504.4h1.6 M356.1 504.4h1.6 M366.1 504.4h1.6 M376.1 504.4h1.6 M386.1 504.4h1.6 M396.1 504.4h1.6 M406.1 504.4h1.6 M416.1 504.4h1.6 M426.1 504.4h1.6 M436.1 504.4h1.6 M446.1 504.4h1.6 M456.1 504.4h1.6 M466.1 504.4h1.6 M476.1 504.4h1.6 M486.1 504.4h1.6 M496.1 504.4h1.6 M506.1 504.4h1.6 M516.1 504.4h1.6 M526.1 504.4h1.6 M536.1 504.4h1.6 M546.1 504.4h1.6 M556.1 504.4h1.6 M566.1 504.4h1.6 M576.1 504.4h1.6 M586.1 504.4h1.6 M596.1 504.4h1.6 M606.1 504.4h1.6 M616.1 504.4h1.6 M626.1 504.4h1.6 M636.1 504.4h1.6 M646.1 504.4h1.6 M656.1 504.4h1.6 M666.1 504.4h1.6 M676.1 504.4h1.6 M686.1 504.4h1.6 M696.1 504.4h1.6 M706.1 504.4h1.6 M716.1 504.4h1.6 M726.1 504.4h1.6 M736.1 504.4h1.6 M746.1 504.4h1.6 M756.1 504.4h1.6 M766.1 504.4h1.6 M776.1 504.4h1.6 M786.1 504.4h1.6 M796.1 504.4h1.6 M806.1 504.4h1.6 M816.1 504.4h1.6 M826.1 504.4h1.6 M836.1 504.4h1.6 M846.1 504.4h1.6 M856.1 504.4h1.6 M866.1 504.4h1.6 M876.1 504.4h1.6 M886.1 504.4h1.6 M896.1 504.4h1.6 M906.1 504.4h1.6 M916.1 504.4h1.6 M926.1 504.4h1.6 M936.1 504.4h1.6 M946.1 504.4h1.6 M956.1 504.4h1.6 M966.1 504.4h1.6 M976.1 504.4h1.6 M986.1 504.4h1.6 M996.1 504.4h1.6 M1006.1 504.4h1.6 M1016.1 504.4h1.6 M1026.1 504.4h1.6 M1036.1 504.4h1.6 M1046.1 504.4h1.6 M1056.1 504.4h1.6 M1066.1 504.4h1.6 M1076.1 504.4h1.6 M1086.1 504.4h1.6 M1096.1 504.4h1.6 M1106.1 504.4h1.6 M1116.1 504.4h1.6 M1126.1 504.4h1.6 M1136.1 504.4h1.6 M1146.1 504.4h1.6 M1156.1 504.4h1.6 M1166.1 504.4h1.6 M1176.1 504.4h1.6 M1186.1 504.4h1.6 M1196.1 504.4h1.6 M1206.1 504.4h1.6 M1216.1 504.4h1.6 M1226.1 504.4h1.6 M1236.1 504.4h1.6 M1246.1 504.4h1.6 M1256.1 504.4h1.6 M1266.1 504.4h1.6 M1276.1 504.4h1.6 M1286.1 504.4h1.6 M1296.1 504.4h1.6 M1306.1 504.4h1.6 M1316.1 504.4h1.6 M1326.1 504.4h1.6 M1336.1 504.4h1.6 M1346.1 504.4h1.6 M1356.1 504.4h1.6 M1366.1 504.4h1.6 M1376.1 504.4h1.6 M116.1 514.4h1.6 M126.1 514.4h1.6 M136.1 514.4h1.6 M146.1 514.4h1.6 M156.1 514.4h1.6 M166.1 514.4h1.6 M176.1 514.4h1.6 M186.1 514.4h1.6 M196.1 514.4h1.6 M206.1 514.4h1.6 M216.1 514.4h1.6 M226.1 514.4h1.6 M236.1 514.4h1.6 M246.1 514.4h1.6 M256.1 514.4h1.6 M266.1 514.4h1.6 M276.1 514.4h1.6 M286.1 514.4h1.6 M296.1 514.4h1.6 M306.1 514.4h1.6 M316.1 514.4h1.6 M326.1 514.4h1.6 M336.1 514.4h1.6 M346.1 514.4h1.6 M356.1 514.4h1.6 M366.1 514.4h1.6 M376.1 514.4h1.6 M386.1 514.4h1.6 M396.1 514.4h1.6 M406.1 514.4h1.6 M416.1 514.4h1.6 M426.1 514.4h1.6 M436.1 514.4h1.6 M446.1 514.4h1.6 M456.1 514.4h1.6 M466.1 514.4h1.6 M476.1 514.4h1.6 M486.1 514.4h1.6 M496.1 514.4h1.6 M506.1 514.4h1.6 M516.1 514.4h1.6 M526.1 514.4h1.6 M536.1 514.4h1.6 M546.1 514.4h1.6 M556.1 514.4h1.6 M566.1 514.4h1.6 M576.1 514.4h1.6 M586.1 514.4h1.6 M596.1 514.4h1.6 M606.1 514.4h1.6 M616.1 514.4h1.6 M626.1 514.4h1.6 M636.1 514.4h1.6 M646.1 514.4h1.6 M656.1 514.4h1.6 M666.1 514.4h1.6 M676.1 514.4h1.6 M686.1 514.4h1.6 M696.1 514.4h1.6 M706.1 514.4h1.6 M716.1 514.4h1.6 M726.1 514.4h1.6 M736.1 514.4h1.6 M746.1 514.4h1.6 M756.1 514.4h1.6 M766.1 514.4h1.6 M776.1 514.4h1.6 M786.1 514.4h1.6 M796.1 514.4h1.6 M806.1 514.4h1.6 M816.1 514.4h1.6 M826.1 514.4h1.6 M836.1 514.4h1.6 M846.1 514.4h1.6 M856.1 514.4h1.6 M866.1 514.4h1.6 M876.1 514.4h1.6 M886.1 514.4h1.6 M896.1 514.4h1.6 M906.1 514.4h1.6 M916.1 514.4h1.6 M926.1 514.4h1.6 M936.1 514.4h1.6 M946.1 514.4h1.6 M956.1 514.4h1.6 M966.1 514.4h1.6 M976.1 514.4h1.6 M986.1 514.4h1.6 M996.1 514.4h1.6 M1006.1 514.4h1.6 M1016.1 514.4h1.6 M1026.1 514.4h1.6 M1036.1 514.4h1.6 M1046.1 514.4h1.6 M1056.1 514.4h1.6 M1066.1 514.4h1.6 M1076.1 514.4h1.6 M1086.1 514.4h1.6 M1096.1 514.4h1.6 M1106.1 514.4h1.6 M1116.1 514.4h1.6 M1126.1 514.4h1.6 M1136.1 514.4h1.6 M1146.1 514.4h1.6 M1156.1 514.4h1.6 M1166.1 514.4h1.6 M1176.1 514.4h1.6 M1186.1 514.4h1.6 M1196.1 514.4h1.6 M1206.1 514.4h1.6 M1216.1 514.4h1.6 M1226.1 514.4h1.6 M1236.1 514.4h1.6 M1246.1 514.4h1.6 M1256.1 514.4h1.6 M1266.1 514.4h1.6 M1276.1 514.4h1.6 M1286.1 514.4h1.6 M1296.1 514.4h1.6 M1306.1 514.4h1.6 M1316.1 514.4h1.6 M1326.1 514.4h1.6 M1336.1 514.4h1.6 M1346.1 514.4h1.6 M1356.1 514.4h1.6 M1366.1 514.4h1.6 M1376.1 514.4h1.6 M116.1 524.4h1.6 M126.1 524.4h1.6 M136.1 524.4h1.6 M146.1 524.4h1.6 M156.1 524.4h1.6 M166.1 524.4h1.6 M176.1 524.4h1.6 M186.1 524.4h1.6 M196.1 524.4h1.6 M206.1 524.4h1.6 M216.1 524.4h1.6 M226.1 524.4h1.6 M236.1 524.4h1.6 M246.1 524.4h1.6 M256.1 524.4h1.6 M266.1 524.4h1.6 M276.1 524.4h1.6 M286.1 524.4h1.6 M296.1 524.4h1.6 M306.1 524.4h1.6 M316.1 524.4h1.6 M326.1 524.4h1.6 M336.1 524.4h1.6 M346.1 524.4h1.6 M356.1 524.4h1.6 M366.1 524.4h1.6 M376.1 524.4h1.6 M386.1 524.4h1.6 M396.1 524.4h1.6 M406.1 524.4h1.6 M416.1 524.4h1.6 M426.1 524.4h1.6 M436.1 524.4h1.6 M446.1 524.4h1.6 M456.1 524.4h1.6 M466.1 524.4h1.6 M476.1 524.4h1.6 M486.1 524.4h1.6 M496.1 524.4h1.6 M506.1 524.4h1.6 M516.1 524.4h1.6 M526.1 524.4h1.6 M536.1 524.4h1.6 M546.1 524.4h1.6 M556.1 524.4h1.6 M566.1 524.4h1.6 M576.1 524.4h1.6 M586.1 524.4h1.6 M596.1 524.4h1.6 M606.1 524.4h1.6 M616.1 524.4h1.6 M626.1 524.4h1.6 M636.1 524.4h1.6 M646.1 524.4h1.6 M656.1 524.4h1.6 M666.1 524.4h1.6 M676.1 524.4h1.6 M686.1 524.4h1.6 M696.1 524.4h1.6 M706.1 524.4h1.6 M716.1 524.4h1.6 M726.1 524.4h1.6 M736.1 524.4h1.6 M746.1 524.4h1.6 M756.1 524.4h1.6 M766.1 524.4h1.6 M776.1 524.4h1.6 M786.1 524.4h1.6 M796.1 524.4h1.6 M806.1 524.4h1.6 M816.1 524.4h1.6 M826.1 524.4h1.6 M836.1 524.4h1.6 M846.1 524.4h1.6 M856.1 524.4h1.6 M866.1 524.4h1.6 M876.1 524.4h1.6 M886.1 524.4h1.6 M896.1 524.4h1.6 M906.1 524.4h1.6 M916.1 524.4h1.6 M926.1 524.4h1.6 M936.1 524.4h1.6 M946.1 524.4h1.6 M956.1 524.4h1.6 M966.1 524.4h1.6 M976.1 524.4h1.6 M986.1 524.4h1.6 M996.1 524.4h1.6 M1006.1 524.4h1.6 M1016.1 524.4h1.6 M1026.1 524.4h1.6 M1036.1 524.4h1.6 M1046.1 524.4h1.6 M1056.1 524.4h1.6 M1066.1 524.4h1.6 M1076.1 524.4h1.6 M1086.1 524.4h1.6 M1096.1 524.4h1.6 M1106.1 524.4h1.6 M1116.1 524.4h1.6 M1126.1 524.4h1.6 M1136.1 524.4h1.6 M1146.1 524.4h1.6 M1156.1 524.4h1.6 M1166.1 524.4h1.6 M1176.1 524.4h1.6 M1186.1 524.4h1.6 M1196.1 524.4h1.6 M1206.1 524.4h1.6 M1216.1 524.4h1.6 M1226.1 524.4h1.6 M1236.1 524.4h1.6 M1246.1 524.4h1.6 M1256.1 524.4h1.6 M1266.1 524.4h1.6 M1276.1 524.4h1.6 M1286.1 524.4h1.6 M1296.1 524.4h1.6 M1306.1 524.4h1.6 M1316.1 524.4h1.6 M1326.1 524.4h1.6 M1336.1 524.4h1.6 M1346.1 524.4h1.6 M1356.1 524.4h1.6 M1366.1 524.4h1.6 M1376.1 524.4h1.6 M116.1 534.4h1.6 M126.1 534.4h1.6 M136.1 534.4h1.6 M146.1 534.4h1.6 M156.1 534.4h1.6 M166.1 534.4h1.6 M176.1 534.4h1.6 M186.1 534.4h1.6 M196.1 534.4h1.6 M206.1 534.4h1.6 M216.1 534.4h1.6 M226.1 534.4h1.6 M236.1 534.4h1.6 M246.1 534.4h1.6 M256.1 534.4h1.6 M266.1 534.4h1.6 M276.1 534.4h1.6 M286.1 534.4h1.6 M296.1 534.4h1.6 M306.1 534.4h1.6 M316.1 534.4h1.6 M326.1 534.4h1.6 M336.1 534.4h1.6 M346.1 534.4h1.6 M356.1 534.4h1.6 M366.1 534.4h1.6 M376.1 534.4h1.6 M386.1 534.4h1.6 M396.1 534.4h1.6 M406.1 534.4h1.6 M416.1 534.4h1.6 M426.1 534.4h1.6 M436.1 534.4h1.6 M446.1 534.4h1.6 M456.1 534.4h1.6 M466.1 534.4h1.6 M476.1 534.4h1.6 M486.1 534.4h1.6 M496.1 534.4h1.6 M506.1 534.4h1.6 M516.1 534.4h1.6 M526.1 534.4h1.6 M536.1 534.4h1.6 M546.1 534.4h1.6 M556.1 534.4h1.6 M566.1 534.4h1.6 M576.1 534.4h1.6 M586.1 534.4h1.6 M596.1 534.4h1.6 M606.1 534.4h1.6 M616.1 534.4h1.6 M626.1 534.4h1.6 M636.1 534.4h1.6 M646.1 534.4h1.6 M656.1 534.4h1.6 M666.1 534.4h1.6 M676.1 534.4h1.6 M686.1 534.4h1.6 M696.1 534.4h1.6 M706.1 534.4h1.6 M716.1 534.4h1.6 M726.1 534.4h1.6 M736.1 534.4h1.6 M746.1 534.4h1.6 M756.1 534.4h1.6 M766.1 534.4h1.6 M776.1 534.4h1.6 M786.1 534.4h1.6 M796.1 534.4h1.6 M806.1 534.4h1.6 M816.1 534.4h1.6 M826.1 534.4h1.6 M836.1 534.4h1.6 M846.1 534.4h1.6 M856.1 534.4h1.6 M866.1 534.4h1.6 M876.1 534.4h1.6 M886.1 534.4h1.6 M896.1 534.4h1.6 M906.1 534.4h1.6 M916.1 534.4h1.6 M926.1 534.4h1.6 M936.1 534.4h1.6 M946.1 534.4h1.6 M956.1 534.4h1.6 M966.1 534.4h1.6 M976.1 534.4h1.6 M986.1 534.4h1.6 M996.1 534.4h1.6 M1006.1 534.4h1.6 M1016.1 534.4h1.6 M1026.1 534.4h1.6 M1036.1 534.4h1.6 M1046.1 534.4h1.6 M1056.1 534.4h1.6 M1066.1 534.4h1.6 M1076.1 534.4h1.6 M1086.1 534.4h1.6 M1096.1 534.4h1.6 M1106.1 534.4h1.6 M1116.1 534.4h1.6 M1126.1 534.4h1.6 M1136.1 534.4h1.6 M1146.1 534.4h1.6 M1156.1 534.4h1.6 M1166.1 534.4h1.6 M1176.1 534.4h1.6 M1186.1 534.4h1.6 M1196.1 534.4h1.6 M1206.1 534.4h1.6 M1216.1 534.4h1.6 M1226.1 534.4h1.6 M1236.1 534.4h1.6 M1246.1 534.4h1.6 M1256.1 534.4h1.6 M1266.1 534.4h1.6 M1276.1 534.4h1.6 M1286.1 534.4h1.6 M1296.1 534.4h1.6 M1306.1 534.4h1.6 M1316.1 534.4h1.6 M1326.1 534.4h1.6 M1336.1 534.4h1.6 M1346.1 534.4h1.6 M1356.1 534.4h1.6 M1366.1 534.4h1.6 M1376.1 534.4h1.6 M116.1 544.4h1.6 M126.1 544.4h1.6 M136.1 544.4h1.6 M146.1 544.4h1.6 M156.1 544.4h1.6 M166.1 544.4h1.6 M176.1 544.4h1.6 M186.1 544.4h1.6 M196.1 544.4h1.6 M206.1 544.4h1.6 M216.1 544.4h1.6 M226.1 544.4h1.6 M236.1 544.4h1.6 M246.1 544.4h1.6 M256.1 544.4h1.6 M266.1 544.4h1.6 M276.1 544.4h1.6 M286.1 544.4h1.6 M296.1 544.4h1.6 M306.1 544.4h1.6 M316.1 544.4h1.6 M326.1 544.4h1.6 M336.1 544.4h1.6 M346.1 544.4h1.6 M356.1 544.4h1.6 M366.1 544.4h1.6 M376.1 544.4h1.6 M386.1 544.4h1.6 M396.1 544.4h1.6 M406.1 544.4h1.6 M416.1 544.4h1.6 M426.1 544.4h1.6 M436.1 544.4h1.6 M446.1 544.4h1.6 M456.1 544.4h1.6 M466.1 544.4h1.6 M476.1 544.4h1.6 M486.1 544.4h1.6 M496.1 544.4h1.6 M506.1 544.4h1.6 M516.1 544.4h1.6 M526.1 544.4h1.6 M536.1 544.4h1.6 M546.1 544.4h1.6 M556.1 544.4h1.6 M566.1 544.4h1.6 M576.1 544.4h1.6 M586.1 544.4h1.6 M596.1 544.4h1.6 M606.1 544.4h1.6 M616.1 544.4h1.6 M626.1 544.4h1.6 M636.1 544.4h1.6 M646.1 544.4h1.6 M656.1 544.4h1.6 M666.1 544.4h1.6 M676.1 544.4h1.6 M686.1 544.4h1.6 M696.1 544.4h1.6 M706.1 544.4h1.6 M716.1 544.4h1.6 M726.1 544.4h1.6 M736.1 544.4h1.6 M746.1 544.4h1.6 M756.1 544.4h1.6 M766.1 544.4h1.6 M776.1 544.4h1.6 M786.1 544.4h1.6 M796.1 544.4h1.6 M806.1 544.4h1.6 M816.1 544.4h1.6 M826.1 544.4h1.6 M836.1 544.4h1.6 M846.1 544.4h1.6 M856.1 544.4h1.6 M866.1 544.4h1.6 M876.1 544.4h1.6 M886.1 544.4h1.6 M896.1 544.4h1.6 M906.1 544.4h1.6 M916.1 544.4h1.6 M926.1 544.4h1.6 M936.1 544.4h1.6 M946.1 544.4h1.6 M956.1 544.4h1.6 M966.1 544.4h1.6 M976.1 544.4h1.6 M986.1 544.4h1.6 M996.1 544.4h1.6 M1006.1 544.4h1.6 M1016.1 544.4h1.6 M1026.1 544.4h1.6 M1036.1 544.4h1.6 M1046.1 544.4h1.6 M1056.1 544.4h1.6 M1066.1 544.4h1.6 M1076.1 544.4h1.6 M1086.1 544.4h1.6 M1096.1 544.4h1.6 M1106.1 544.4h1.6 M1116.1 544.4h1.6 M1126.1 544.4h1.6 M1136.1 544.4h1.6 M1146.1 544.4h1.6 M1156.1 544.4h1.6 M1166.1 544.4h1.6 M1176.1 544.4h1.6 M1186.1 544.4h1.6 M1196.1 544.4h1.6 M1206.1 544.4h1.6 M1216.1 544.4h1.6 M1226.1 544.4h1.6 M1236.1 544.4h1.6 M1246.1 544.4h1.6 M1256.1 544.4h1.6 M1266.1 544.4h1.6 M1276.1 544.4h1.6 M1286.1 544.4h1.6 M1296.1 544.4h1.6 M1306.1 544.4h1.6 M1316.1 544.4h1.6 M1326.1 544.4h1.6 M1336.1 544.4h1.6 M1346.1 544.4h1.6 M1356.1 544.4h1.6 M1366.1 544.4h1.6 M1376.1 544.4h1.6 M116.1 554.4h1.6 M126.1 554.4h1.6 M136.1 554.4h1.6 M146.1 554.4h1.6 M156.1 554.4h1.6 M166.1 554.4h1.6 M176.1 554.4h1.6 M186.1 554.4h1.6 M196.1 554.4h1.6 M206.1 554.4h1.6 M216.1 554.4h1.6 M226.1 554.4h1.6 M236.1 554.4h1.6 M246.1 554.4h1.6 M256.1 554.4h1.6 M266.1 554.4h1.6 M276.1 554.4h1.6 M286.1 554.4h1.6 M296.1 554.4h1.6 M306.1 554.4h1.6 M316.1 554.4h1.6 M326.1 554.4h1.6 M336.1 554.4h1.6 M346.1 554.4h1.6 M356.1 554.4h1.6 M366.1 554.4h1.6 M376.1 554.4h1.6 M386.1 554.4h1.6 M396.1 554.4h1.6 M406.1 554.4h1.6 M416.1 554.4h1.6 M426.1 554.4h1.6 M436.1 554.4h1.6 M446.1 554.4h1.6 M456.1 554.4h1.6 M466.1 554.4h1.6 M476.1 554.4h1.6 M486.1 554.4h1.6 M496.1 554.4h1.6 M506.1 554.4h1.6 M516.1 554.4h1.6 M526.1 554.4h1.6 M536.1 554.4h1.6 M546.1 554.4h1.6 M556.1 554.4h1.6 M566.1 554.4h1.6 M576.1 554.4h1.6 M586.1 554.4h1.6 M596.1 554.4h1.6 M606.1 554.4h1.6 M616.1 554.4h1.6 M626.1 554.4h1.6 M636.1 554.4h1.6 M646.1 554.4h1.6 M656.1 554.4h1.6 M666.1 554.4h1.6 M676.1 554.4h1.6 M686.1 554.4h1.6 M696.1 554.4h1.6 M706.1 554.4h1.6 M716.1 554.4h1.6 M726.1 554.4h1.6 M736.1 554.4h1.6 M746.1 554.4h1.6 M756.1 554.4h1.6 M766.1 554.4h1.6 M776.1 554.4h1.6 M786.1 554.4h1.6 M796.1 554.4h1.6 M806.1 554.4h1.6 M816.1 554.4h1.6 M826.1 554.4h1.6 M836.1 554.4h1.6 M846.1 554.4h1.6 M856.1 554.4h1.6 M866.1 554.4h1.6 M876.1 554.4h1.6 M886.1 554.4h1.6 M896.1 554.4h1.6 M906.1 554.4h1.6 M916.1 554.4h1.6 M926.1 554.4h1.6 M936.1 554.4h1.6 M946.1 554.4h1.6 M956.1 554.4h1.6 M966.1 554.4h1.6 M976.1 554.4h1.6 M986.1 554.4h1.6 M996.1 554.4h1.6 M1006.1 554.4h1.6 M1016.1 554.4h1.6 M1026.1 554.4h1.6 M1036.1 554.4h1.6 M1046.1 554.4h1.6 M1056.1 554.4h1.6 M1066.1 554.4h1.6 M1076.1 554.4h1.6 M1086.1 554.4h1.6 M1096.1 554.4h1.6 M1106.1 554.4h1.6 M1116.1 554.4h1.6 M1126.1 554.4h1.6 M1136.1 554.4h1.6 M1146.1 554.4h1.6 M1156.1 554.4h1.6 M1166.1 554.4h1.6 M1176.1 554.4h1.6 M1186.1 554.4h1.6 M1196.1 554.4h1.6 M1206.1 554.4h1.6 M1216.1 554.4h1.6 M1226.1 554.4h1.6 M1236.1 554.4h1.6 M1246.1 554.4h1.6 M1256.1 554.4h1.6 M1266.1 554.4h1.6 M1276.1 554.4h1.6 M1286.1 554.4h1.6 M1296.1 554.4h1.6 M1306.1 554.4h1.6 M1316.1 554.4h1.6 M1326.1 554.4h1.6 M1336.1 554.4h1.6 M1346.1 554.4h1.6 M1356.1 554.4h1.6 M1366.1 554.4h1.6 M1376.1 554.4h1.6 M116.1 564.4h1.6 M126.1 564.4h1.6 M136.1 564.4h1.6 M146.1 564.4h1.6 M156.1 564.4h1.6 M166.1 564.4h1.6 M176.1 564.4h1.6 M186.1 564.4h1.6 M196.1 564.4h1.6 M206.1 564.4h1.6 M216.1 564.4h1.6 M226.1 564.4h1.6 M236.1 564.4h1.6 M246.1 564.4h1.6 M256.1 564.4h1.6 M266.1 564.4h1.6 M276.1 564.4h1.6 M286.1 564.4h1.6 M296.1 564.4h1.6 M306.1 564.4h1.6 M316.1 564.4h1.6 M326.1 564.4h1.6 M336.1 564.4h1.6 M346.1 564.4h1.6 M356.1 564.4h1.6 M366.1 564.4h1.6 M376.1 564.4h1.6 M386.1 564.4h1.6 M396.1 564.4h1.6 M406.1 564.4h1.6 M416.1 564.4h1.6 M426.1 564.4h1.6 M436.1 564.4h1.6 M446.1 564.4h1.6 M456.1 564.4h1.6 M466.1 564.4h1.6 M476.1 564.4h1.6 M486.1 564.4h1.6 M496.1 564.4h1.6 M506.1 564.4h1.6 M516.1 564.4h1.6 M526.1 564.4h1.6 M536.1 564.4h1.6 M546.1 564.4h1.6 M556.1 564.4h1.6 M566.1 564.4h1.6 M576.1 564.4h1.6 M586.1 564.4h1.6 M596.1 564.4h1.6 M606.1 564.4h1.6 M616.1 564.4h1.6 M626.1 564.4h1.6 M636.1 564.4h1.6 M646.1 564.4h1.6 M656.1 564.4h1.6 M666.1 564.4h1.6 M676.1 564.4h1.6 M686.1 564.4h1.6 M696.1 564.4h1.6 M706.1 564.4h1.6 M716.1 564.4h1.6 M726.1 564.4h1.6 M736.1 564.4h1.6 M746.1 564.4h1.6 M756.1 564.4h1.6 M766.1 564.4h1.6 M776.1 564.4h1.6 M786.1 564.4h1.6 M796.1 564.4h1.6 M806.1 564.4h1.6 M816.1 564.4h1.6 M826.1 564.4h1.6 M836.1 564.4h1.6 M846.1 564.4h1.6 M856.1 564.4h1.6 M866.1 564.4h1.6 M876.1 564.4h1.6 M886.1 564.4h1.6 M896.1 564.4h1.6 M906.1 564.4h1.6 M916.1 564.4h1.6 M926.1 564.4h1.6 M936.1 564.4h1.6 M946.1 564.4h1.6 M956.1 564.4h1.6 M966.1 564.4h1.6 M976.1 564.4h1.6 M986.1 564.4h1.6 M996.1 564.4h1.6 M1006.1 564.4h1.6 M1016.1 564.4h1.6 M1026.1 564.4h1.6 M1036.1 564.4h1.6 M1046.1 564.4h1.6 M1056.1 564.4h1.6 M1066.1 564.4h1.6 M1076.1 564.4h1.6 M1086.1 564.4h1.6 M1096.1 564.4h1.6 M1106.1 564.4h1.6 M1116.1 564.4h1.6 M1126.1 564.4h1.6 M1136.1 564.4h1.6 M1146.1 564.4h1.6 M1156.1 564.4h1.6 M1166.1 564.4h1.6 M1176.1 564.4h1.6 M1186.1 564.4h1.6 M1196.1 564.4h1.6 M1206.1 564.4h1.6 M1216.1 564.4h1.6 M1226.1 564.4h1.6 M1236.1 564.4h1.6 M1246.1 564.4h1.6 M1256.1 564.4h1.6 M1266.1 564.4h1.6 M1276.1 564.4h1.6 M1286.1 564.4h1.6 M1296.1 564.4h1.6 M1306.1 564.4h1.6 M1316.1 564.4h1.6 M1326.1 564.4h1.6 M1336.1 564.4h1.6 M1346.1 564.4h1.6 M1356.1 564.4h1.6 M1366.1 564.4h1.6 M1376.1 564.4h1.6 M116.1 574.4h1.6 M126.1 574.4h1.6 M136.1 574.4h1.6 M146.1 574.4h1.6 M156.1 574.4h1.6 M166.1 574.4h1.6 M176.1 574.4h1.6 M186.1 574.4h1.6 M196.1 574.4h1.6 M206.1 574.4h1.6 M216.1 574.4h1.6 M226.1 574.4h1.6 M236.1 574.4h1.6 M246.1 574.4h1.6 M256.1 574.4h1.6 M266.1 574.4h1.6 M276.1 574.4h1.6 M286.1 574.4h1.6 M296.1 574.4h1.6 M306.1 574.4h1.6 M316.1 574.4h1.6 M326.1 574.4h1.6 M336.1 574.4h1.6 M346.1 574.4h1.6 M356.1 574.4h1.6 M366.1 574.4h1.6 M376.1 574.4h1.6 M386.1 574.4h1.6 M396.1 574.4h1.6 M406.1 574.4h1.6 M416.1 574.4h1.6 M426.1 574.4h1.6 M436.1 574.4h1.6 M446.1 574.4h1.6 M456.1 574.4h1.6 M466.1 574.4h1.6 M476.1 574.4h1.6 M486.1 574.4h1.6 M496.1 574.4h1.6 M506.1 574.4h1.6 M516.1 574.4h1.6 M526.1 574.4h1.6 M536.1 574.4h1.6 M546.1 574.4h1.6 M556.1 574.4h1.6 M566.1 574.4h1.6 M576.1 574.4h1.6 M586.1 574.4h1.6 M596.1 574.4h1.6 M606.1 574.4h1.6 M616.1 574.4h1.6 M626.1 574.4h1.6 M636.1 574.4h1.6 M646.1 574.4h1.6 M656.1 574.4h1.6 M666.1 574.4h1.6 M676.1 574.4h1.6 M686.1 574.4h1.6 M696.1 574.4h1.6 M706.1 574.4h1.6 M716.1 574.4h1.6 M726.1 574.4h1.6 M736.1 574.4h1.6 M746.1 574.4h1.6 M756.1 574.4h1.6 M766.1 574.4h1.6 M776.1 574.4h1.6 M786.1 574.4h1.6 M796.1 574.4h1.6 M806.1 574.4h1.6 M816.1 574.4h1.6 M826.1 574.4h1.6 M836.1 574.4h1.6 M846.1 574.4h1.6 M856.1 574.4h1.6 M866.1 574.4h1.6 M876.1 574.4h1.6 M886.1 574.4h1.6 M896.1 574.4h1.6 M906.1 574.4h1.6 M916.1 574.4h1.6 M926.1 574.4h1.6 M936.1 574.4h1.6 M946.1 574.4h1.6 M956.1 574.4h1.6 M966.1 574.4h1.6 M976.1 574.4h1.6 M986.1 574.4h1.6 M996.1 574.4h1.6 M1006.1 574.4h1.6 M1016.1 574.4h1.6 M1026.1 574.4h1.6 M1036.1 574.4h1.6 M1046.1 574.4h1.6 M1056.1 574.4h1.6 M1066.1 574.4h1.6 M1076.1 574.4h1.6 M1086.1 574.4h1.6 M1096.1 574.4h1.6 M1106.1 574.4h1.6 M1116.1 574.4h1.6 M1126.1 574.4h1.6 M1136.1 574.4h1.6 M1146.1 574.4h1.6 M1156.1 574.4h1.6 M1166.1 574.4h1.6 M1176.1 574.4h1.6 M1186.1 574.4h1.6 M1196.1 574.4h1.6 M1206.1 574.4h1.6 M1216.1 574.4h1.6 M1226.1 574.4h1.6 M1236.1 574.4h1.6 M1246.1 574.4h1.6 M1256.1 574.4h1.6 M1266.1 574.4h1.6 M1276.1 574.4h1.6 M1286.1 574.4h1.6 M1296.1 574.4h1.6 M1306.1 574.4h1.6 M1316.1 574.4h1.6 M1326.1 574.4h1.6 M1336.1 574.4h1.6 M1346.1 574.4h1.6 M1356.1 574.4h1.6 M1366.1 574.4h1.6 M1376.1 574.4h1.6" stroke="#555" stroke-width="1.5" fill="none"/></svg>
<div class="t" style="left:159.70px;top:353.5px;font-size:14.5px;color:#222;letter-spacing:0.350px;">@number@@</div>
<div class="t" style="left:249.00px;top:374.5px;font-size:14.5px;color:#222;letter-spacing:0.25px">@manual@@</div>
<div class="t" style="left:159.70px;top:393.5px;font-size:14.5px;color:#222;letter-spacing:0.317px;">@date@@</div>
<div class="t" style="left:159.70px;top:433.5px;font-size:14.5px;color:#222;letter-spacing:0.417px;">@excel_1@@</div>
<div class="t" style="left:159.70px;top:473.5px;font-size:14.5px;color:#222;letter-spacing:0.417px;">@excel_2@@</div>
<div style="position:absolute;left:156.4px;top:504.4px;width:59.6px;height:19.2px;background:linear-gradient(#ffe68a,#f5b416);border:1.3px solid #333"></div>
<div class="t" style="left:168.40px;top:503.5px;font-size:13px;color:#111;letter-spacing:-0.313px;">param</div>
<svg style="position:absolute;left:156px;top:523.4px;" width="52" height="33" viewBox="0 0 52 33"><path d="M0.00 0.00h2.20v2.20h-2.20z M2.15 0.00h2.20v2.20h-2.20z M6.45 0.00h2.20v2.20h-2.20z M10.75 0.00h2.20v2.20h-2.20z M12.90 0.00h2.20v2.20h-2.20z M17.20 0.00h2.20v2.20h-2.20z M19.35 0.00h2.20v2.20h-2.20z M21.50 0.00h2.20v2.20h-2.20z M23.65 0.00h2.20v2.20h-2.20z M25.80 0.00h2.20v2.20h-2.20z M30.10 0.00h2.20v2.20h-2.20z M32.25 0.00h2.20v2.20h-2.20z M40.85 0.00h2.20v2.20h-2.20z M45.15 0.00h2.20v2.20h-2.20z M49.45 0.00h2.20v2.20h-2.20z M0.00 2.15h2.20v2.20h-2.20z M2.15 2.15h2.20v2.20h-2.20z M4.30 2.15h2.20v2.20h-2.20z M8.60 2.15h2.20v2.20h-2.20z M15.05 2.15h2.20v2.20h-2.20z M19.35 2.15h2.20v2.20h-2.20z M21.50 2.15h2.20v2.20h-2.20z M23.65 2.15h2.20v2.20h-2.20z M27.95 2.15h2.20v2.20h-2.20z M30.10 2.15h2.20v2.20h-2.20z M34.40 2.15h2.20v2.20h-2.20z M36.55 2.15h2.20v2.20h-2.20z M43.00 2.15h2.20v2.20h-2.20z M2.15 4.30h2.20v2.20h-2.20z M6.45 4.30h2.20v2.20h-2.20z M8.60 4.30h2.20v2.20h-2.20z M12.90 4.30h2.20v2.20h-2.20z M17.20 4.30h2.20v2.20h-2.20z M27.95 4.30h2.20v2.20h-2.20z M36.55 4.30h2.20v2.20h-2.20z M47.30 4.30h2.20v2.20h-2.20z M6.45 6.45h2.20v2.20h-2.20z M8.60 6.45h2.20v2.20h-2.20z M12.90 6.45h2.20v2.20h-2.20z M15.05 6.45h2.20v2.20h-2.20z M17.20 6.45h2.20v2.20h-2.20z M19.35 6.45h2.20v2.20h-2.20z M21.50 6.45h2.20v2.20h-2.20z M25.80 6.45h2.20v2.20h-2.20z M27.95 6.45h2.20v2.20h-2.20z M30.10 6.45h2.20v2.20h-2.20z M34.40 6.45h2.20v2.20h-2.20z M36.55 6.45h2.20v2.20h-2.20z M47.30 6.45h2.20v2.20h-2.20z M49.45 6.45h2.20v2.20h-2.20z M0.00 8.60h2.20v2.20h-2.20z M6.45 8.60h2.20v2.20h-2.20z M8.60 8.60h2.20v2.20h-2.20z M10.75 8.60h2.20v2.20h-2.20z M12.90 8.60h2.20v2.20h-2.20z M19.35 8.60h2.20v2.20h-2.20z M21.50 8.60h2.20v2.20h-2.20z M23.65 8.60h2.20v2.20h-2.20z M25.80 8.60h2.20v2.20h-2.20z M40.85 8.60h2.20v2.20h-2.20z M0.00 10.75h2.20v2.20h-2.20z M2.15 10.75h2.20v2.20h-2.20z M4.30 10.75h2.20v2.20h-2.20z M8.60 10.75h2.20v2.20h-2.20z M10.75 10.75h2.20v2.20h-2.20z M12.90 10.75h2.20v2.20h-2.20z M15.05 10.75h2.20v2.20h-2.20z M17.20 10.75h2.20v2.20h-2.20z M19.35 10.75h2.20v2.20h-2.20z M21.50 10.75h2.20v2.20h-2.20z M23.65 10.75h2.20v2.20h-2.20z M25.80 10.75h2.20v2.20h-2.20z M27.95 10.75h2.20v2.20h-2.20z M30.10 10.75h2.20v2.20h-2.20z M36.55 10.75h2.20v2.20h-2.20z M38.70 10.75h2.20v2.20h-2.20z M40.85 10.75h2.20v2.20h-2.20z M43.00 10.75h2.20v2.20h-2.20z M45.15 10.75h2.20v2.20h-2.20z M0.00 12.90h2.20v2.20h-2.20z M4.30 12.90h2.20v2.20h-2.20z M6.45 12.90h2.20v2.20h-2.20z M8.60 12.90h2.20v2.20h-2.20z M10.75 12.90h2.20v2.20h-2.20z M15.05 12.90h2.20v2.20h-2.20z M17.20 12.90h2.20v2.20h-2.20z M23.65 12.90h2.20v2.20h-2.20z M27.95 12.90h2.20v2.20h-2.20z M38.70 12.90h2.20v2.20h-2.20z M40.85 12.90h2.20v2.20h-2.20z M43.00 12.90h2.20v2.20h-2.20z M17.20 15.05h2.20v2.20h-2.20z M21.50 15.05h2.20v2.20h-2.20z M23.65 15.05h2.20v2.20h-2.20z M25.80 15.05h2.20v2.20h-2.20z M27.95 15.05h2.20v2.20h-2.20z M30.10 15.05h2.20v2.20h-2.20z M34.40 15.05h2.20v2.20h-2.20z M36.55 15.05h2.20v2.20h-2.20z M38.70 15.05h2.20v2.20h-2.20z M40.85 15.05h2.20v2.20h-2.20z M43.00 15.05h2.20v2.20h-2.20z M45.15 15.05h2.20v2.20h-2.20z M47.30 15.05h2.20v2.20h-2.20z M49.45 15.05h2.20v2.20h-2.20z M0.00 17.20h2.20v2.20h-2.20z M2.15 17.20h2.20v2.20h-2.20z M4.30 17.20h2.20v2.20h-2.20z M6.45 17.20h2.20v2.20h-2.20z M8.60 17.20h2.20v2.20h-2.20z M10.75 17.20h2.20v2.20h-2.20z M12.90 17.20h2.20v2.20h-2.20z M17.20 17.20h2.20v2.20h-2.20z M30.10 17.20h2.20v2.20h-2.20z M34.40 17.20h2.20v2.20h-2.20z M43.00 17.20h2.20v2.20h-2.20z M49.45 17.20h2.20v2.20h-2.20z M0.00 19.35h2.20v2.20h-2.20z M12.90 19.35h2.20v2.20h-2.20z M17.20 19.35h2.20v2.20h-2.20z M21.50 19.35h2.20v2.20h-2.20z M23.65 19.35h2.20v2.20h-2.20z M34.40 19.35h2.20v2.20h-2.20z M38.70 19.35h2.20v2.20h-2.20z M43.00 19.35h2.20v2.20h-2.20z M45.15 19.35h2.20v2.20h-2.20z M47.30 19.35h2.20v2.20h-2.20z M0.00 21.50h2.20v2.20h-2.20z M4.30 21.50h2.20v2.20h-2.20z M6.45 21.50h2.20v2.20h-2.20z M8.60 21.50h2.20v2.20h-2.20z M12.90 21.50h2.20v2.20h-2.20z M17.20 21.50h2.20v2.20h-2.20z M27.95 21.50h2.20v2.20h-2.20z M30.10 21.50h2.20v2.20h-2.20z M32.25 21.50h2.20v2.20h-2.20z M34.40 21.50h2.20v2.20h-2.20z M43.00 21.50h2.20v2.20h-2.20z M47.30 21.50h2.20v2.20h-2.20z M0.00 23.65h2.20v2.20h-2.20z M4.30 23.65h2.20v2.20h-2.20z M6.45 23.65h2.20v2.20h-2.20z M8.60 23.65h2.20v2.20h-2.20z M12.90 23.65h2.20v2.20h-2.20z M23.65 23.65h2.20v2.20h-2.20z M34.40 23.65h2.20v2.20h-2.20z M36.55 23.65h2.20v2.20h-2.20z M38.70 23.65h2.20v2.20h-2.20z M40.85 23.65h2.20v2.20h-2.20z M43.00 23.65h2.20v2.20h-2.20z M49.45 23.65h2.20v2.20h-2.20z M0.00 25.80h2.20v2.20h-2.20z M4.30 25.80h2.20v2.20h-2.20z M6.45 25.80h2.20v2.20h-2.20z M8.60 25.80h2.20v2.20h-2.20z M12.90 25.80h2.20v2.20h-2.20z M17.20 25.80h2.20v2.20h-2.20z M25.80 25.80h2.20v2.20h-2.20z M32.25 25.80h2.20v2.20h-2.20z M38.70 25.80h2.20v2.20h-2.20z M43.00 25.80h2.20v2.20h-2.20z M0.00 27.95h2.20v2.20h-2.20z M12.90 27.95h2.20v2.20h-2.20z M19.35 27.95h2.20v2.20h-2.20z M21.50 27.95h2.20v2.20h-2.20z M23.65 27.95h2.20v2.20h-2.20z M30.10 27.95h2.20v2.20h-2.20z M38.70 27.95h2.20v2.20h-2.20z M40.85 27.95h2.20v2.20h-2.20z M43.00 27.95h2.20v2.20h-2.20z M47.30 27.95h2.20v2.20h-2.20z M49.45 27.95h2.20v2.20h-2.20z M0.00 30.10h2.20v2.20h-2.20z M2.15 30.10h2.20v2.20h-2.20z M4.30 30.10h2.20v2.20h-2.20z M6.45 30.10h2.20v2.20h-2.20z M8.60 30.10h2.20v2.20h-2.20z M10.75 30.10h2.20v2.20h-2.20z M12.90 30.10h2.20v2.20h-2.20z M17.20 30.10h2.20v2.20h-2.20z M19.35 30.10h2.20v2.20h-2.20z M23.65 30.10h2.20v2.20h-2.20z M25.80 30.10h2.20v2.20h-2.20z M34.40 30.10h2.20v2.20h-2.20z M38.70 30.10h2.20v2.20h-2.20z M43.00 30.10h2.20v2.20h-2.20z M45.15 30.10h2.20v2.20h-2.20z" fill="#000"/></svg>
<div style="position:absolute;left:88.5px;top:932.5px;width:2.6px;height:2.6px;background:#888"></div>
<div style="position:absolute;left:94px;top:932.5px;width:2.6px;height:2.6px;background:#888"></div>
<div style="position:absolute;left:88.5px;top:937.5px;width:2.6px;height:2.6px;background:#888"></div>
<div style="position:absolute;left:94px;top:937.5px;width:2.6px;height:2.6px;background:#888"></div>
<div style="position:absolute;left:88.5px;top:942.8px;width:2.6px;height:2.6px;background:#888"></div>
<div style="position:absolute;left:94px;top:942.8px;width:2.6px;height:2.6px;background:#888"></div>
<svg style="position:absolute;left:100px;top:915px;" width="230" height="45" viewBox="0 0 230 45"><g fill="#ff8000"><rect x="12" y="7.6" width="3" height="32.4"/><rect x="19" y="15.6" width="26.3" height="5"/><rect x="19" y="27" width="16" height="5.6"/><rect x="82" y="7.6" width="3" height="32.4"/><rect x="68.7" y="15.6" width="30" height="5"/><rect x="73.9" y="27" width="19.8" height="5.6"/><rect x="152" y="7.6" width="3" height="32.4"/><rect x="121.8" y="15.6" width="26.8" height="5"/><rect x="132" y="27" width="16.6" height="5.6"/><rect x="176.8" y="7.6" width="40" height="3.4"/><rect x="185.4" y="14" width="4.6" height="26"/><rect x="197" y="14" width="5" height="16.7"/></g></svg>
<div style="position:absolute;left:0px;top:963px;width:1800px;height:1.4px;background:#a0a0a0"></div>
<div style="position:absolute;left:1px;top:964.4px;width:1799px;height:36px;background:#f2f2f2"></div>
<div class="t" style="left:12.50px;top:974px;font-size:13px;color:#2a2a3a;letter-spacing:0.643px;">X=2.7686</div>
<div class="t" style="left:112.00px;top:974px;font-size:13px;color:#2a2a3a;letter-spacing:0.550px;">Y=0</div>
<div class="t" style="left:214.60px;top:974px;font-size:13px;color:#2a2a3a;letter-spacing:-1.450px;">cm</div>
<div style="position:absolute;left:1790px;top:986px;width:2.8px;height:2.8px;background:#999"></div>
<div style="position:absolute;left:1790px;top:991px;width:2.8px;height:2.8px;background:#999"></div>
<div style="position:absolute;left:1795px;top:986px;width:2.8px;height:2.8px;background:#999"></div>
<div style="position:absolute;left:1795px;top:991px;width:2.8px;height:2.8px;background:#999"></div>
<div style="position:absolute;left:1384px;top:215.5px;width:377px;height:744px;background:#e8e8e8;border:1.3px solid #a0a0a0"></div>
<div class="t" style="left:1494.00px;top:224px;font-size:18px;color:#2a2a3a;font-weight:bold;letter-spacing:-0.575px;">label</div>
<svg style="position:absolute;left:1732px;top:222px;" width="20" height="22" viewBox="0 0 20 22"><path d="M4.4 6.4 H15.8 M5.5 6.6 L8.6 11.4 L6.2 15 M14.8 6.6 L11.4 11.4 L14 15 M5.8 14.8 H14.3 M10.1 15 V17.6" fill="none" stroke="#2a2a2a" stroke-width="1.4"/></svg>
<div style="position:absolute;left:1390px;top:256px;width:366px;height:699px;background:#fff;border:1.2px solid #c8c8c8;border-bottom:1.8px solid #8a8a8a;border-radius:4.5px"></div>
<div style="position:absolute;left:1390px;top:423px;width:362px;height:31.5px;background:#c9c9c9;border-radius:5px"></div>
<div class="t" style="left:1494.05px;top:300px;font-size:14px;color:#2a2a3a;letter-spacing:0.050px;">wy 4</div>
<div class="t" style="left:1496.05px;top:332px;font-size:14px;color:#2a2a3a;letter-spacing:-0.200px;">we 3</div>
<div class="t" style="left:1496.05px;top:364.3px;font-size:14px;color:#2a2a3a;letter-spacing:-0.200px;">we 2</div>
<div class="t" style="left:1496.05px;top:396.6px;font-size:14px;color:#2a2a3a;letter-spacing:-0.200px;">we 1</div>
<div class="t" style="left:1496.05px;top:429px;font-size:14px;color:#2a2a3a;letter-spacing:-0.200px;">we 0</div>
<div class="t" style="left:1718.5px;top:276.5px;width:130px;text-align:center;font-size:13.5px;color:#1e1e2e;transform:rotate(90deg);transform-origin:50% 50%;letter-spacing:0.07px">History of changes</div>
<div style="position:absolute;left:308px;top:944px;width:1072px;height:16px;background:#e6e6e6;border-top:1.3px solid #999;border-bottom:1.3px solid #999"></div>
<div style="position:absolute;left:323px;top:944px;width:1.2px;height:16px;background:#999"></div>
<div style="position:absolute;left:436.6px;top:944px;width:1.2px;height:16px;background:#999"></div>
<div style="position:absolute;left:605.6px;top:944px;width:1.2px;height:16px;background:#999"></div>
<div style="position:absolute;left:829.3px;top:944px;width:1.2px;height:16px;background:#999"></div>
<div style="position:absolute;left:1378px;top:944px;width:1.2px;height:16px;background:#999"></div>
<svg style="position:absolute;left:300px;top:940px;" width="640" height="20" viewBox="0 0 640 20"><g fill="#ff8000"><rect x="44" y="0" width="5" height="14"/><rect x="55.6" y="0" width="5" height="9"/><rect x="99.4" y="0" width="5" height="9"/><rect x="111.3" y="0" width="5" height="9"/><rect x="91" y="12.6" width="33" height="3"/><path d="M152 4 Q158 14 167 12 Q172 10 174 4" fill="none" stroke="#ff8000" stroke-width="3" stroke-dasharray="4 3"/><path d="M210 4 Q216 14 225 12 Q230 10 232 4" fill="none" stroke="#ff8000" stroke-width="3"/><path d="M262 4 Q268 14 277 12 Q282 10 284 4" fill="none" stroke="#ff8000" stroke-width="3" stroke-dasharray="4 3"/><rect x="333" y="0" width="3" height="11"/><rect x="376.7" y="10" width="26.6" height="3.5"/><path d="M430 3 H460 M430 10 H460" stroke="#ff8000" stroke-width="3" stroke-dasharray="3 3"/><path d="M486 0 V12 H514 V7" fill="none" stroke="#ff8000" stroke-width="3"/><rect x="545.5" y="0" width="26.5" height="14" rx="2"/></g><path d="M597 4 V12 H605 M620 4 H630 V12" fill="none" stroke="#aaa" stroke-width="2"/></svg>
<div style="position:absolute;left:208px;top:-44px;width:1389px;height:1089px;-webkit-mask-image:linear-gradient(to bottom,rgba(0,0,0,.35) 0px,rgba(0,0,0,.35) 95px,rgba(0,0,0,.62) 150px,rgba(0,0,0,.75) 300px,#000 550px);mask-image:linear-gradient(to bottom,rgba(0,0,0,.35) 0px,rgba(0,0,0,.35) 95px,rgba(0,0,0,.62) 150px,rgba(0,0,0,.75) 300px,#000 550px)"><div style="position:absolute;left:100px;top:100px;width:1189px;height:889px;background:#888;box-shadow:0 0 56px rgba(0,0,0,0.2)"></div></div>
<div style="position:absolute;left:348px;top:500px;width:1109px;height:444px;background:#888;box-shadow:0 50px 100px rgba(0,0,0,0.07)"></div>
<div style="position:absolute;left:308px;top:56px;width:1189px;height:889px;background:#e8e8e8;border:1.3px solid #8c8c8c"></div>
<div class="t" style="left:323.90px;top:65px;font-size:14px;color:#a2a4ae;letter-spacing:-0.137px;">Multiple printing...</div>
<svg style="position:absolute;left:1463px;top:67px;" width="15" height="15" viewBox="0 0 15 15"><path d="M1 1 L14 14 M14 1 L1 14" stroke="#8a8a8a" stroke-width="1.1"/></svg>
<div style="position:absolute;left:340.7px;top:107px;width:588.3px;height:742.5px;background:#e8e8e8;border:1.3px solid #a8a8a8;border-radius:5px"></div>
<div style="position:absolute;left:342.0px;top:108.3px;width:585.6999999999999px;height:23.7px;background:#f3f3f3;border-radius:4px 4px 0 0"></div>
<div style="position:absolute;left:340.7px;top:132px;width:588.3px;height:1.3px;background:#a8a8a8"></div>
<div class="t" style="left:355.00px;top:110.6px;font-size:14px;color:#2a2a3a;letter-spacing:-0.210px;">Multiple printing configuration</div>
<div style="position:absolute;left:946.9px;top:107.5px;width:516.1px;height:261.5px;background:#e8e8e8;border:1.3px solid #a8a8a8;border-radius:5px"></div>
<div style="position:absolute;left:948.1999999999999px;top:108.8px;width:513.5px;height:23.50000000000001px;background:#f3f3f3;border-radius:4px 4px 0 0"></div>
<div style="position:absolute;left:946.9px;top:132.3px;width:516.1px;height:1.3px;background:#a8a8a8"></div>
<div class="t" style="left:961.50px;top:110.8px;font-size:14px;color:#2a2a3a;letter-spacing:-0.421px;">Printing</div>
<div style="position:absolute;left:946.9px;top:389px;width:516.1px;height:128px;background:#e8e8e8;border:1.3px solid #a8a8a8;border-radius:5px"></div>
<div style="position:absolute;left:948.1999999999999px;top:390.3px;width:513.5px;height:23.2px;background:#f3f3f3;border-radius:4px 4px 0 0"></div>
<div style="position:absolute;left:946.9px;top:413.5px;width:516.1px;height:1.3px;background:#a8a8a8"></div>
<div class="t" style="left:961.00px;top:392.2px;font-size:14px;color:#2a2a3a;letter-spacing:-0.405px;">Label amount</div>
<div style="position:absolute;left:946.9px;top:536px;width:516.1px;height:313px;background:#e8e8e8;border:1.3px solid #a8a8a8;border-radius:5px"></div>
<div style="position:absolute;left:948.1999999999999px;top:537.3px;width:513.5px;height:23.7px;background:#f3f3f3;border-radius:4px 4px 0 0"></div>
<div style="position:absolute;left:946.9px;top:561px;width:516.1px;height:1.3px;background:#a8a8a8"></div>
<div class="t" style="left:961.70px;top:539.5px;font-size:14px;color:#2a2a3a;letter-spacing:-0.494px;">Margins and spaces</div>
<svg style="position:absolute;left:340px;top:140px;" width="520" height="660" viewBox="0 0 520 660"><g transform="translate(-340,-140)"><rect x="358.8" y="154.3" width="486.3" height="623.7" fill="#fffde0" stroke="#333" stroke-width="1.7"/><rect x="363.6" y="158" width="472.4" height="611.2" fill="#fff" stroke="#2a2a2a" stroke-width="1.6"/><rect x="387.3" y="175.5" width="448.7" height="593.7" fill="#fff" stroke="#ffac1c" stroke-width="1.4"/><g stroke="#8c8c8c" stroke-width="1.4"><path d="M387.4 175.5 V723"/><path d="M497.2 175.5 V723"/><path d="M606 175.5 V723"/><path d="M716 175.5 V723"/><path d="M825 175.5 V723"/><path d="M387.4 175.5 H825"/><path d="M387.4 285.4 H825"/><path d="M387.4 395.2 H825"/><path d="M387.4 504.3 H825"/><path d="M387.4 614.3 H825"/><path d="M387.4 723 H825"/></g></g></svg>
<div style="position:absolute;left:856px;top:154.3px;width:58.5px;height:41.19999999999999px;background:#fff;border:1px solid #d2d2d2;border-bottom:1.5px solid #a2a2a2;border-radius:5px"></div>
<svg style="position:absolute;left:873px;top:162px;" width="25" height="25" viewBox="0 0 25 25"><path d="M1 24 V18 L16 3 L22 9 L7 24Z" fill="#ff8000"/><path d="M18.5 1.5 L21 -1 L26 4 L23.5 6.5Z" fill="#ff8000" transform="translate(0,1.5)"/></svg>
<div style="position:absolute;left:856px;top:204.3px;width:58.5px;height:41.0px;background:#fff;border:1px solid #d2d2d2;border-bottom:1.5px solid #a2a2a2;border-radius:5px"></div>
<svg style="position:absolute;left:874px;top:213.5px;" width="23" height="23" viewBox="0 0 23 23"><path d="M2.5 0 H17.5 L23 5.5 V20.5 Q23 22.5 21 22.5 H2.5 Q0 22.5 0 20.5 V2 Q0 0 2.5 0Z" fill="#ff8000"/><rect x="3" y="2.7" width="12" height="5" fill="#fff"/><circle cx="11.5" cy="16.3" r="3.7" fill="#fff"/></svg>
<div class="t" style="left:358.30px;top:800px;font-size:15.5px;color:#ff8a2a;letter-spacing:0.312px;">Current configuration:</div>
<div style="position:absolute;left:965px;top:154.3px;width:58.60000000000002px;height:47.29999999999998px;background:#fff;border:1px solid #d2d2d2;border-bottom:1.5px solid #a2a2a2;border-radius:5px"></div>
<svg style="position:absolute;left:980px;top:162px;" width="30" height="28" viewBox="0 0 30 28"><circle cx="8" cy="8.3" r="4.3" fill="#ff8000"/><circle cx="8" cy="8.3" r="5" fill="none" stroke="#ff8000" stroke-width="1.8" stroke-dasharray="2.6 1.33"/><circle cx="8.5" cy="10.2" r="2" fill="#fff"/><path d="M2 10.2 H25 Q27 10.2 27 13 V21.3 H21.5 V26.4 H7 V21.3 H2Z" fill="#ff8000"/><rect x="9" y="18" width="11" height="6" fill="#fff"/><circle cx="24" cy="13.8" r="1.2" fill="#fff"/></svg>
<div style="position:absolute;left:1106.5px;top:154.5px;width:147.0px;height:47.0px;background:#fff;border:1px solid #d2d2d2;border-bottom:1.5px solid #a2a2a2;border-radius:5px"></div>
<svg style="position:absolute;left:1113px;top:166px;" width="23" height="23" viewBox="0 0 23 23"><rect x="1.25" y="1.25" width="20.5" height="20.5" rx="2" fill="none" stroke="#ff8000" stroke-width="2.5"/><rect x="1" y="1" width="21" height="5" rx="1.5" fill="#ff8000"/><path d="M2.5 12 Q11.5 3 20.5 12 Q11.5 21 2.5 12Z" fill="#ff8000"/><circle cx="11.5" cy="12" r="2.4" fill="#fff"/><circle cx="11.5" cy="12" r="1" fill="#ff8000"/></svg>
<div class="t" style="left:1156.00px;top:168.6px;font-size:14px;color:#2a2a3a;letter-spacing:-0.187px;">Print preview</div>
<div style="position:absolute;left:1297.5px;top:154.5px;width:147.5px;height:47.0px;background:#fff;border:1px solid #d2d2d2;border-bottom:1.5px solid #a2a2a2;border-radius:5px"></div>
<svg style="position:absolute;left:1303px;top:166px;" width="26" height="23" viewBox="0 0 26 23"><rect x="5" y="0" width="15" height="5" fill="#ff8000"/><path d="M3 6.3 H22.5 Q25 6.3 25 9 V17.6 H20 V22.7 H5 V17.6 H0 V9 Q0 6.3 3 6.3Z" fill="#ff8000"/><rect x="7.9" y="14" width="9.8" height="5.6" fill="#fff"/><rect x="21" y="9" width="2" height="2" fill="#fff"/></svg>
<div class="t" style="left:1373.60px;top:168.6px;font-size:14px;color:#2a2a3a;letter-spacing:-0.200px;">Print</div>
<div class="t" style="left:964.80px;top:211px;font-size:15px;color:#ff8a2a;letter-spacing:0.074px;">HP LaserJet Pro M501 PCL 6</div>
<div class="t" style="left:963.40px;top:267.3px;font-size:14px;color:#2a2a3a;letter-spacing:-0.330px;">Paper:</div>
<div style="position:absolute;left:1105.3px;top:263.7px;width:341.2px;height:27.6px;background:#fff;border:1px solid #d0d0d0;border-bottom:1.8px solid #707070;border-radius:5px;box-shadow:0 0.6px 0.8px rgba(0,0,0,0.18)"></div>
<div class="t" style="left:1110.00px;top:267.2px;font-size:14px;color:#2a2a3a;letter-spacing:-0.060px;">Letter</div>
<svg style="position:absolute;left:1424px;top:272px;" width="15" height="10" viewBox="0 0 15 10"><path d="M1.5 2 L7 7.5 L12.5 2" fill="none" stroke="#333" stroke-width="1.3"/></svg>
<div style="position:absolute;left:1106.2px;top:301.2px;width:19.5px;height:19.5px;background:#fff;border:1.2px solid #8c8c8c;border-radius:4px"></div>
<div class="t" style="left:1130.00px;top:300.5px;font-size:14px;color:#2a2a3a;letter-spacing:-0.277px;">Landscape format</div>
<div style="position:absolute;left:1106.2px;top:333.7px;width:19.5px;height:19.5px;background:#fff;border:1.2px solid #8c8c8c;border-radius:4px"></div>
<div class="t" style="left:1130.00px;top:333.5px;font-size:14px;color:#2a2a3a;letter-spacing:-0.291px;">Check values during printing</div>
<div class="t" style="left:963.90px;top:433.6px;font-size:14px;color:#2a2a3a;letter-spacing:-0.736px;">Columns:</div>
<div style="position:absolute;left:1105.3px;top:430.2px;width:106.90000000000005px;height:27.400000000000013px;background:#fff;border:1px solid #d0d0d0;border-bottom:1.8px solid #707070;border-radius:5px;box-shadow:0 0.6px 0.8px rgba(0,0,0,0.18)"></div>
<div class="t" style="left:1175.20px;top:433.6px;font-size:14px;color:#2a2a3a;">4</div>
<svg style="position:absolute;left:1191.0px;top:435.0px;" width="12" height="16" viewBox="0 0 12 16"><path d="M1 5.8 L6 1 L11 5.8 M1 10.2 L6 15 L11 10.2" fill="none" stroke="#3c3c3c" stroke-width="1.35"/></svg>
<div class="t" style="left:964.00px;top:474.5px;font-size:14px;color:#2a2a3a;letter-spacing:-0.475px;">Rows:</div>
<div style="position:absolute;left:1105.3px;top:471.4px;width:106.90000000000005px;height:27.400000000000013px;background:#fff;border:1px solid #d0d0d0;border-bottom:1.8px solid #707070;border-radius:5px;box-shadow:0 0.6px 0.8px rgba(0,0,0,0.18)"></div>
<div class="t" style="left:1175.20px;top:474.5px;font-size:14px;color:#2a2a3a;">5</div>
<svg style="position:absolute;left:1191.0px;top:476.20000000000005px;" width="12" height="16" viewBox="0 0 12 16"><path d="M1 5.8 L6 1 L11 5.8 M1 10.2 L6 15 L11 10.2" fill="none" stroke="#3c3c3c" stroke-width="1.35"/></svg>
<div class="t" style="left:963.80px;top:581.8px;font-size:14px;color:#2a2a3a;letter-spacing:-0.284px;">Measurement unit:</div>
<div style="position:absolute;left:1105.3px;top:578.9000000000001px;width:106.7px;height:26.799999999999933px;background:#fff;border:1px solid #d0d0d0;border-bottom:1.8px solid #707070;border-radius:5px;box-shadow:0 0.6px 0.8px rgba(0,0,0,0.18)"></div>
<div class="t" style="left:1110.10px;top:581.8px;font-size:14px;color:#2a2a3a;letter-spacing:-0.667px;">Millimeter</div>
<svg style="position:absolute;left:1189px;top:587px;" width="15" height="10" viewBox="0 0 15 10"><path d="M2 2 L7.5 7.5 L13 2" fill="none" stroke="#333" stroke-width="1.3"/></svg>
<div class="t" style="left:963.30px;top:643.6px;font-size:14px;color:#2a2a3a;letter-spacing:-0.145px;">Left margin:</div>
<div style="position:absolute;left:1105.3px;top:639.8000000000001px;width:106.90000000000005px;height:27.299999999999933px;background:#fff;border:1px solid #d0d0d0;border-bottom:1.8px solid #707070;border-radius:5px;box-shadow:0 0.6px 0.8px rgba(0,0,0,0.18)"></div>
<div class="t" style="left:1168.90px;top:643.6px;font-size:14px;color:#2a2a3a;letter-spacing:-0.650px;">11</div>
<svg style="position:absolute;left:1191.0px;top:644.5500000000001px;" width="12" height="16" viewBox="0 0 12 16"><path d="M1 5.8 L6 1 L11 5.8 M1 10.2 L6 15 L11 10.2" fill="none" stroke="#3c3c3c" stroke-width="1.35"/></svg>
<div class="t" style="left:1223.00px;top:643.6px;font-size:14px;color:#2a2a3a;letter-spacing:-0.285px;">Top margin:</div>
<div style="position:absolute;left:1339.8999999999999px;top:639.8000000000001px;width:107.2px;height:27.299999999999933px;background:#fff;border:1px solid #d0d0d0;border-bottom:1.8px solid #707070;border-radius:5px;box-shadow:0 0.6px 0.8px rgba(0,0,0,0.18)"></div>
<div class="t" style="left:1389.70px;top:643.6px;font-size:14px;color:#2a2a3a;letter-spacing:0.183px;">8.00</div>
<svg style="position:absolute;left:1425.8999999999999px;top:644.5500000000001px;" width="12" height="16" viewBox="0 0 12 16"><path d="M1 5.8 L6 1 L11 5.8 M1 10.2 L6 15 L11 10.2" fill="none" stroke="#3c3c3c" stroke-width="1.35"/></svg>
<div class="t" style="left:963.30px;top:684.4px;font-size:14px;color:#2a2a3a;letter-spacing:-0.337px;">Right margin:</div>
<div style="position:absolute;left:1105.3px;top:680.9000000000001px;width:106.90000000000005px;height:27.69999999999991px;background:#fff;border:1px solid #d0d0d0;border-bottom:1.8px solid #707070;border-radius:5px;box-shadow:0 0.6px 0.8px rgba(0,0,0,0.18)"></div>
<div class="t" style="left:1175.00px;top:684.4px;font-size:14px;color:#2a2a3a;">0</div>
<svg style="position:absolute;left:1191.0px;top:685.85px;" width="12" height="16" viewBox="0 0 12 16"><path d="M1 5.8 L6 1 L11 5.8 M1 10.2 L6 15 L11 10.2" fill="none" stroke="#3c3c3c" stroke-width="1.35"/></svg>
<div class="t" style="left:1223.00px;top:684.4px;font-size:14px;color:#2a2a3a;letter-spacing:-0.358px;">Bottom margin:</div>
<div style="position:absolute;left:1339.8999999999999px;top:680.9000000000001px;width:107.2px;height:27.69999999999991px;background:#fff;border:1px solid #d0d0d0;border-bottom:1.8px solid #707070;border-radius:5px;box-shadow:0 0.6px 0.8px rgba(0,0,0,0.18)"></div>
<div class="t" style="left:1410.00px;top:684.4px;font-size:14px;color:#2a2a3a;">0</div>
<svg style="position:absolute;left:1425.8999999999999px;top:685.85px;" width="12" height="16" viewBox="0 0 12 16"><path d="M1 5.8 L6 1 L11 5.8 M1 10.2 L6 15 L11 10.2" fill="none" stroke="#3c3c3c" stroke-width="1.35"/></svg>
<div style="position:absolute;left:962px;top:738px;width:476px;height:1px;background:#dcdcdc"></div>
<div class="t" style="left:963.30px;top:769.6px;font-size:14px;color:#2a2a3a;letter-spacing:-0.275px;">Vertical space:</div>
<div style="position:absolute;left:1105.3px;top:766.1px;width:106.90000000000005px;height:27.49999999999998px;background:#fff;border:1px solid #d0d0d0;border-bottom:1.8px solid #707070;border-radius:5px;box-shadow:0 0.6px 0.8px rgba(0,0,0,0.18)"></div>
<div class="t" style="left:1175.00px;top:769.6px;font-size:14px;color:#2a2a3a;">0</div>
<svg style="position:absolute;left:1191.0px;top:770.9499999999999px;" width="12" height="16" viewBox="0 0 12 16"><path d="M1 5.8 L6 1 L11 5.8 M1 10.2 L6 15 L11 10.2" fill="none" stroke="#3c3c3c" stroke-width="1.35"/></svg>
<div class="t" style="left:963.30px;top:812.6px;font-size:14px;color:#2a2a3a;letter-spacing:-0.278px;">Horizontal space:</div>
<div style="position:absolute;left:1105.3px;top:808.7px;width:106.90000000000005px;height:27.49999999999998px;background:#fff;border:1px solid #d0d0d0;border-bottom:1.8px solid #707070;border-radius:5px;box-shadow:0 0.6px 0.8px rgba(0,0,0,0.18)"></div>
<div class="t" style="left:1175.00px;top:812.6px;font-size:14px;color:#2a2a3a;">0</div>
<svg style="position:absolute;left:1191.0px;top:813.5500000000001px;" width="12" height="16" viewBox="0 0 12 16"><path d="M1 5.8 L6 1 L11 5.8 M1 10.2 L6 15 L11 10.2" fill="none" stroke="#3c3c3c" stroke-width="1.35"/></svg>
<div style="position:absolute;left:1149px;top:875px;width:143.29999999999995px;height:39.200000000000045px;background:#fff;border:1px solid #d2d2d2;border-bottom:1.5px solid #a2a2a2;border-radius:5px"></div>
<div class="t" style="left:1203.80px;top:885px;font-size:14px;color:#2a2a3a;letter-spacing:-1.000px;">Close</div>
<div style="position:absolute;left:1318.7px;top:875px;width:144.0px;height:39.200000000000045px;background:#ececec;border:1px solid #dadada;border-bottom:1.5px solid #dadada;border-radius:5px"></div>
<svg style="position:absolute;left:1325.8px;top:882px;" width="23" height="23" viewBox="0 0 23 23"><path d="M2.5 0 H17.5 L22.5 5 V20.5 Q22.5 22.5 20.5 22.5 H2.5 Q0 22.5 0 20.5 V2 Q0 0 2.5 0Z" fill="#b4b4b4"/><rect x="3" y="2.7" width="12" height="5" fill="#ececec"/><circle cx="11.3" cy="16.3" r="3.7" fill="#ececec"/></svg>
<div class="t" style="left:1391.20px;top:885px;font-size:14px;color:#b8b8b8;letter-spacing:-0.800px;">Save</div>
</body></html>
